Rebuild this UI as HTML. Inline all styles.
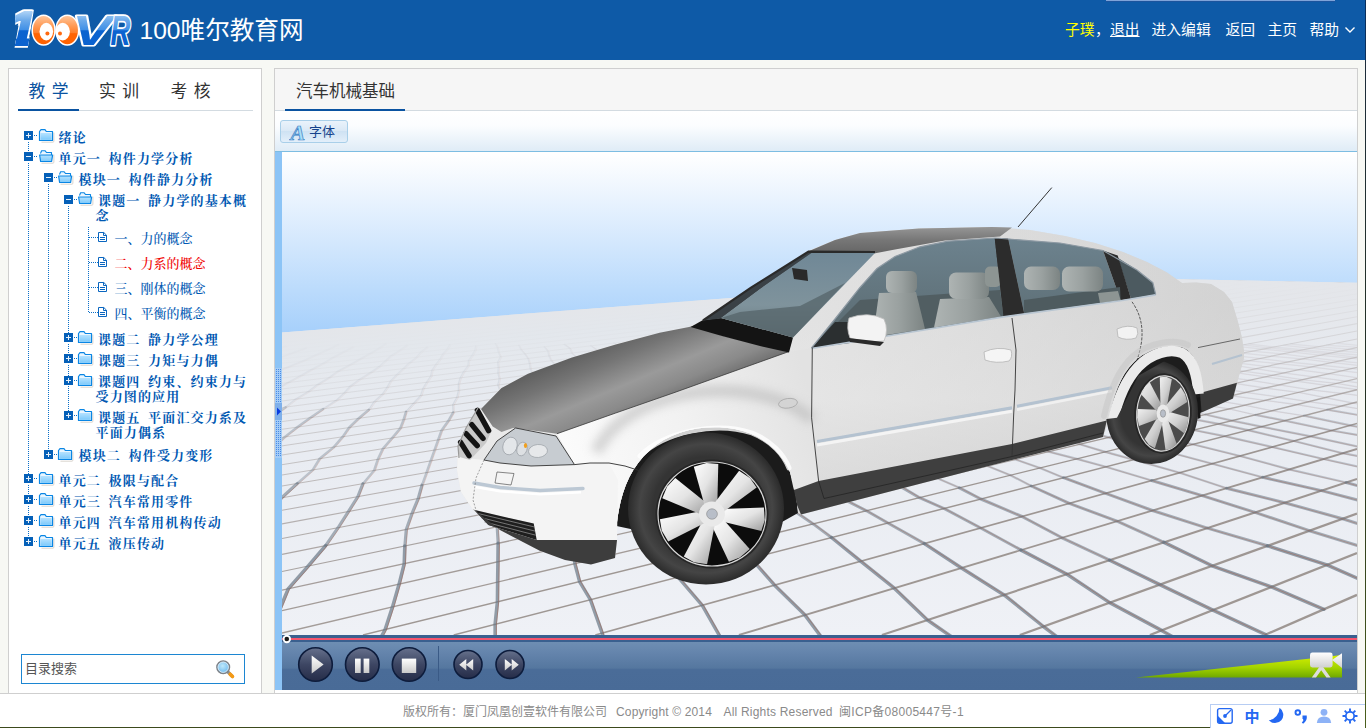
<!DOCTYPE html>
<html lang="zh-CN">
<head>
<meta charset="utf-8">
<title>100唯尔教育网</title>
<style>
*{box-sizing:border-box;margin:0;padding:0}
html,body{width:1366px;height:728px;overflow:hidden}
body{position:relative;background:#f7f8f4;font-family:"Liberation Sans","Noto Sans CJK SC",sans-serif;color:#333}
.abs{position:absolute}
#hdr{left:0;top:0;width:1366px;height:60px;background:#0e5aa7}
#hdr .title{left:139.5px;top:13.5px;font-size:24.6px;line-height:34px;color:#fff;white-space:nowrap;letter-spacing:0}
#nav{top:20px;height:20px;font-size:14.8px;line-height:20px;color:#fff;white-space:nowrap}
#nav span{position:absolute;top:0}
#topstrip{left:1106px;top:0;width:229px;height:1px;background:#7fa3d9;box-shadow:0 1px 0 rgba(40,80,150,.55)}
#rightedge{left:1365px;top:0;width:1px;height:728px;background:linear-gradient(#0a2f5c 0,#0a2f5c 60px,#1c2c3a 61px,#26331f 60%,#4b5f1c 100%)}
/* left panel */
#lp{left:8px;top:68px;width:254px;height:626px;background:#fff;border:1px solid #cfcfcf;border-bottom:none}
.tabs{font-size:16.8px;line-height:22px;color:#333;white-space:nowrap;letter-spacing:6.5px}
#lp .tabline{left:10px;top:41px;width:234px;height:1px;background:#d3dbe1}
#lp .tabsel{left:9px;top:40px;width:61px;height:2px;background:#0a53a1}
/* tree */
.tree{font-family:"Liberation Serif","Noto Serif CJK SC",serif;font-size:13px;line-height:15px;color:#0058b2;white-space:nowrap;font-weight:500}
.tree .b{font-weight:bold;letter-spacing:1.15px}
.tree .row{position:absolute}
.tree .red{color:#f00000}
.exp{position:absolute;width:9px;height:9px;background:#0560b8}
.exp:before{content:"";position:absolute;left:2px;top:4px;width:5px;height:1px;background:#e8f0f8}
.exp.plus:after{content:"";position:absolute;left:4px;top:2px;width:1px;height:5px;background:#e8f0f8}
.vd{position:absolute;width:1px;background:repeating-linear-gradient(to bottom,#0a6fc8 0 1px,transparent 1px 2px)}
.hd{position:absolute;height:1px;background:repeating-linear-gradient(to right,#0a6fc8 0 1px,transparent 1px 2px)}
svg.ico{position:absolute;overflow:visible}
/* search */
#search{left:21px;top:654px;width:224px;height:30px;border:1px solid #1c86d2;background:#fff}
#search .ph{left:3px;top:5px;font-size:13px;line-height:18px;color:#555}
/* right panel */
#rp{left:274px;top:68px;width:1084px;height:626px;background:#fff;border:1px solid #cfcfcf;border-bottom:none}
#rp .rhead{left:0;top:0;width:1082px;height:41px;background:#f6f6f6}
#rp .tabline{left:0;top:41px;width:1082px;height:1px;background:#d3dbe1}
#rp .tabsel{left:10px;top:40px;width:120px;height:2px;background:#0a53a1}
#toolbar{left:0;top:43px;width:1082px;height:40px;background:linear-gradient(#ffffff 0%,#fbfdff 35%,#deebf6 100%)}
#toolbar .bline{left:0;top:39px;width:1082px;height:2px;background:#7dbde2}
#fontbtn{left:5px;top:8px;width:68px;height:23px;border:1px solid #a9cfe9;border-radius:3px;background:linear-gradient(#eaf3fb 0%,#dbe9f6 45%,#cfe2f3 50%,#e3effa 100%)}
#fontbtn .t{left:28px;top:2.5px;font-size:13px;line-height:16px;color:#15428b;white-space:nowrap}
#split{left:0;top:83px;width:7px;height:538px;background:#8cc4f6}
#scene{left:7px;top:83px;width:1075px;height:483px;overflow:hidden}
#player{left:7px;top:566px;width:1075px;height:55px;background:linear-gradient(#6e8eb3 0%,#6e8eb3 13%,#6383ab 35%,#55779f 60%,#4a6c98 63%,#496b97 100%)}
#player .topband{left:0;top:0;width:1075px;height:7px;background:#3a608f}
#player .red{left:0;top:3px;width:1075px;height:2px;background:#f5556e}
/* footer */
#footer{left:0;top:693px;width:1366px;height:34px;background:#fff;border-top:1px solid #cfcfcf}
#footer .t{left:403px;top:10px;font-size:12px;line-height:16px;color:#8a8a8a;white-space:pre}
#desk{left:0;top:727px;width:1366px;height:1px;background:#3c4a1c}
#ime{left:1210px;top:704px;width:156px;height:24px;background:#fff;border-left:1px solid #b7cdf3;border-top:1px solid #b7cdf3}
</style>
</head>
<body>
<svg width="0" height="0" style="position:absolute"><defs>
<linearGradient id="fg" x1="0" y1="0" x2="0" y2="1"><stop offset="0" stop-color="#b5e2ff"/><stop offset="1" stop-color="#7cc9fb"/></linearGradient>
</defs></svg>

<!-- ===== header ===== -->
<div id="hdr" class="abs">
  <svg class="abs" style="left:10px;top:4px" width="130" height="50" viewBox="10 4 130 50">
    <defs>
      <linearGradient id="lgb" gradientUnits="userSpaceOnUse" x1="0" y1="-35" x2="0" y2="1"><stop offset="0" stop-color="#b9d9f8"/><stop offset=".3" stop-color="#6aa9ea"/><stop offset=".56" stop-color="#3f8fe6"/><stop offset=".58" stop-color="#0b63d0"/><stop offset="1" stop-color="#0b62cf"/></linearGradient>
      <linearGradient id="lgo" gradientUnits="userSpaceOnUse" x1="0" y1="15" x2="0" y2="46"><stop offset="0" stop-color="#ffc9a0"/><stop offset=".35" stop-color="#ff9a55"/><stop offset=".58" stop-color="#ff7f2a"/><stop offset=".6" stop-color="#ff6404"/><stop offset="1" stop-color="#ff6200"/></linearGradient>
    </defs>
    <defs><clipPath id="oneclip"><path d="M15.200 6 H34.500 L27.800 48 H14.500 L18.500 25.500 L15.200 26.500Z"/></clipPath></defs>
    <g font-family="'Liberation Sans',sans-serif" font-weight="bold" font-style="italic" stroke-linejoin="round">
      <g clip-path="url(#oneclip)">
        <text transform="translate(6.500 44.800) scale(1.12 1)" font-size="49" fill="#fff" stroke="#fff" stroke-width="5.500">1</text>
        <text transform="translate(6.500 44.800) scale(1.12 1)" font-size="49" fill="url(#lgb)" stroke="url(#lgb)" stroke-width="2">1</text>
      </g>
      <text transform="translate(72 44.800) scale(1.4 1)" font-size="43" fill="#fff" stroke="#fff" stroke-width="3.200">V</text>
      <text transform="translate(72 44.800) scale(1.4 1)" font-size="43" fill="url(#lgb)">V</text>
      <text transform="translate(110.600 44.800) scale(.64 1)" font-size="43" fill="#fff" stroke="#fff" stroke-width="3.600">R</text>
      <text transform="translate(110.600 44.800) scale(.64 1)" font-size="43" fill="url(#lgb)">R</text>
    </g>
    <g>
      <ellipse cx="43.600" cy="30.200" rx="11.400" ry="14.900" fill="url(#lgo)" stroke="#fff" stroke-width="1.500"/>
      <ellipse cx="67.300" cy="30.200" rx="11.400" ry="14.900" fill="url(#lgo)" stroke="#fff" stroke-width="1.500"/>
      <ellipse cx="46.300" cy="31.600" rx="6.800" ry="8.800" fill="#fff"/>
      <ellipse cx="62.700" cy="31.600" rx="7.200" ry="8.800" fill="#fff"/>
      <circle cx="47.400" cy="33.400" r="2" fill="#ff6a10"/>
      <circle cx="60" cy="33.400" r="2" fill="#ff6a10"/>
    </g>
  </svg>
  <div class="abs title">100唯尔教育网</div>
  <div id="nav" class="abs" style="left:0;width:1366px">
    <span style="left:1065px;color:#ffff00">子璞</span>
    <span style="left:1095px">，</span>
    <span style="left:1110px;text-decoration:underline">退出</span>
    <span style="left:1151.500px">进入编辑</span>
    <span style="left:1225.500px">返回</span>
    <span style="left:1267.500px">主页</span>
    <span style="left:1309.500px">帮助</span>
    <svg class="abs" style="left:1344px;top:6px" width="12" height="8" viewBox="0 0 12 8"><path d="M1.5 1.5 L6 6 L10.5 1.5" fill="none" stroke="#fff" stroke-width="1.4"/></svg>
  </div>
  <div id="topstrip" class="abs"></div>
</div>

<!-- ===== left panel ===== -->
<div id="lp" class="abs">
  <div class="abs tabs" style="left:19.500px;top:12px;color:#0a53a1">教学</div>
  <div class="abs tabs" style="left:90px;top:12px">实训</div>
  <div class="abs tabs" style="left:161.500px;top:12px">考核</div>
  <div class="abs tabline"></div>
  <div class="abs tabsel"></div>
</div>
<div class="tree"><i class="exp plus" style="left:24px;top:131px"></i>
<i class="hd" style="left:34px;top:135px;width:4px"></i>
<svg class="ico" style="left:39px;top:129px" width="16" height="14" viewBox="0 0 16 14"><path d="M2.5 13.2h11.6l.8-.6V3.6" fill="none" stroke="#c9c2b8" stroke-width="1" opacity=".7"/><path d="M.5 2.5 L2 .6 H6 L7.3 2.5 H13.5 V11.5 H.5Z" fill="#eaf6ff" stroke="#0a86e4" stroke-width="1.2" stroke-linejoin="round"/><rect x="1.4" y="4" width="11.3" height="6.9" fill="url(#fg)"/></svg>
<div class="row b" style="left:58.5px;top:129.5px">绪论</div>
<i class="exp" style="left:24px;top:152px"></i>
<i class="hd" style="left:34px;top:156px;width:4px"></i>
<svg class="ico" style="left:39px;top:150px" width="16" height="14" viewBox="0 0 16 14"><path d="M2.5 13.2h11.6l.8-.6V4.6" fill="none" stroke="#c9c2b8" stroke-width="1" opacity=".7"/><path d="M1.5 3.5 L2.6 .8 H6.2 L7.5 2.5 H12.5 V5" fill="#eaf6ff" stroke="#0a86e4" stroke-width="1.1" stroke-linejoin="round"/><path d="M.6 5 H13.6 L12.6 11.5 H1.6Z" fill="url(#fg)" stroke="#0a86e4" stroke-width="1.2" stroke-linejoin="round"/></svg>
<div class="row b" style="left:58.5px;top:150.5px">单元一&ensp;构件力学分析</div>
<i class="exp" style="left:44px;top:173px"></i>
<i class="hd" style="left:54px;top:177px;width:4px"></i>
<svg class="ico" style="left:58px;top:171px" width="16" height="14" viewBox="0 0 16 14"><path d="M2.5 13.2h11.6l.8-.6V4.6" fill="none" stroke="#c9c2b8" stroke-width="1" opacity=".7"/><path d="M1.5 3.5 L2.6 .8 H6.2 L7.5 2.5 H12.5 V5" fill="#eaf6ff" stroke="#0a86e4" stroke-width="1.1" stroke-linejoin="round"/><path d="M.6 5 H13.6 L12.6 11.5 H1.6Z" fill="url(#fg)" stroke="#0a86e4" stroke-width="1.2" stroke-linejoin="round"/></svg>
<div class="row b" style="left:78.5px;top:171.5px">模块一&ensp;构件静力分析</div>
<i class="exp" style="left:64px;top:195px"></i>
<i class="hd" style="left:74px;top:199px;width:4px"></i>
<svg class="ico" style="left:78px;top:192px" width="16" height="14" viewBox="0 0 16 14"><path d="M2.5 13.2h11.6l.8-.6V4.6" fill="none" stroke="#c9c2b8" stroke-width="1" opacity=".7"/><path d="M1.5 3.5 L2.6 .8 H6.2 L7.5 2.5 H12.5 V5" fill="#eaf6ff" stroke="#0a86e4" stroke-width="1.1" stroke-linejoin="round"/><path d="M.6 5 H13.6 L12.6 11.5 H1.6Z" fill="url(#fg)" stroke="#0a86e4" stroke-width="1.2" stroke-linejoin="round"/></svg>
<div class="row b" style="left:98px;top:193px">课题一&ensp;静力学的基本概</div>
<div class="row b" style="left:95.5px;top:208px">念</div>
<i class="hd" style="left:89px;top:237px;width:9px"></i>
<svg class="ico" style="left:98px;top:232px" width="10" height="11" viewBox="0 0 10 11"><path d="M.5 .5 H5.8 L8.5 3.2 V9.5 H.5Z" fill="#fff" stroke="#0a66c0" stroke-width="1"/><path d="M5.5 .5V3.5H8.5" fill="none" stroke="#0a66c0" stroke-width="1"/><path d="M2 5.5H7M2 7.5H7" stroke="#0a66c0" stroke-width="1"/></svg>
<div class="row n" style="left:114.5px;top:230.5px">一、力的概念</div>
<i class="hd" style="left:89px;top:262px;width:9px"></i>
<svg class="ico" style="left:98px;top:257px" width="10" height="11" viewBox="0 0 10 11"><path d="M.5 .5 H5.8 L8.5 3.2 V9.5 H.5Z" fill="#fff" stroke="#0a66c0" stroke-width="1"/><path d="M5.5 .5V3.5H8.5" fill="none" stroke="#0a66c0" stroke-width="1"/><path d="M2 5.5H7M2 7.5H7" stroke="#0a66c0" stroke-width="1"/></svg>
<div class="row red" style="left:114.5px;top:255.5px">二、力系的概念</div>
<i class="hd" style="left:89px;top:287px;width:9px"></i>
<svg class="ico" style="left:98px;top:282px" width="10" height="11" viewBox="0 0 10 11"><path d="M.5 .5 H5.8 L8.5 3.2 V9.5 H.5Z" fill="#fff" stroke="#0a66c0" stroke-width="1"/><path d="M5.5 .5V3.5H8.5" fill="none" stroke="#0a66c0" stroke-width="1"/><path d="M2 5.5H7M2 7.5H7" stroke="#0a66c0" stroke-width="1"/></svg>
<div class="row n" style="left:114.5px;top:280.5px">三、刚体的概念</div>
<i class="hd" style="left:89px;top:312px;width:9px"></i>
<svg class="ico" style="left:98px;top:307px" width="10" height="11" viewBox="0 0 10 11"><path d="M.5 .5 H5.8 L8.5 3.2 V9.5 H.5Z" fill="#fff" stroke="#0a66c0" stroke-width="1"/><path d="M5.5 .5V3.5H8.5" fill="none" stroke="#0a66c0" stroke-width="1"/><path d="M2 5.5H7M2 7.5H7" stroke="#0a66c0" stroke-width="1"/></svg>
<div class="row n" style="left:114.5px;top:305.5px">四、平衡的概念</div>
<i class="exp plus" style="left:64px;top:333px"></i>
<i class="hd" style="left:74px;top:337px;width:4px"></i>
<svg class="ico" style="left:78px;top:331px" width="16" height="14" viewBox="0 0 16 14"><path d="M2.5 13.2h11.6l.8-.6V3.6" fill="none" stroke="#c9c2b8" stroke-width="1" opacity=".7"/><path d="M.5 2.5 L2 .6 H6 L7.3 2.5 H13.5 V11.5 H.5Z" fill="#eaf6ff" stroke="#0a86e4" stroke-width="1.2" stroke-linejoin="round"/><rect x="1.4" y="4" width="11.3" height="6.9" fill="url(#fg)"/></svg>
<div class="row b" style="left:98px;top:331.5px">课题二&ensp;静力学公理</div>
<i class="exp plus" style="left:64px;top:354px"></i>
<i class="hd" style="left:74px;top:358px;width:4px"></i>
<svg class="ico" style="left:78px;top:352px" width="16" height="14" viewBox="0 0 16 14"><path d="M2.5 13.2h11.6l.8-.6V3.6" fill="none" stroke="#c9c2b8" stroke-width="1" opacity=".7"/><path d="M.5 2.5 L2 .6 H6 L7.3 2.5 H13.5 V11.5 H.5Z" fill="#eaf6ff" stroke="#0a86e4" stroke-width="1.2" stroke-linejoin="round"/><rect x="1.4" y="4" width="11.3" height="6.9" fill="url(#fg)"/></svg>
<div class="row b" style="left:98px;top:352.5px">课题三&ensp;力矩与力偶</div>
<i class="exp plus" style="left:64px;top:376px"></i>
<i class="hd" style="left:74px;top:380px;width:4px"></i>
<svg class="ico" style="left:78px;top:374px" width="16" height="14" viewBox="0 0 16 14"><path d="M2.5 13.2h11.6l.8-.6V3.6" fill="none" stroke="#c9c2b8" stroke-width="1" opacity=".7"/><path d="M.5 2.5 L2 .6 H6 L7.3 2.5 H13.5 V11.5 H.5Z" fill="#eaf6ff" stroke="#0a86e4" stroke-width="1.2" stroke-linejoin="round"/><rect x="1.4" y="4" width="11.3" height="6.9" fill="url(#fg)"/></svg>
<div class="row b" style="left:98px;top:374px">课题四&ensp;约束、约束力与</div>
<div class="row b" style="left:95.5px;top:389px">受力图的应用</div>
<i class="exp plus" style="left:64px;top:411px"></i>
<i class="hd" style="left:74px;top:415px;width:4px"></i>
<svg class="ico" style="left:78px;top:409px" width="16" height="14" viewBox="0 0 16 14"><path d="M2.5 13.2h11.6l.8-.6V3.6" fill="none" stroke="#c9c2b8" stroke-width="1" opacity=".7"/><path d="M.5 2.5 L2 .6 H6 L7.3 2.5 H13.5 V11.5 H.5Z" fill="#eaf6ff" stroke="#0a86e4" stroke-width="1.2" stroke-linejoin="round"/><rect x="1.4" y="4" width="11.3" height="6.9" fill="url(#fg)"/></svg>
<div class="row b" style="left:98px;top:409.5px">课题五&ensp;平面汇交力系及</div>
<div class="row b" style="left:95.5px;top:424.5px">平面力偶系</div>
<i class="exp plus" style="left:44px;top:450px"></i>
<i class="hd" style="left:54px;top:454px;width:4px"></i>
<svg class="ico" style="left:58px;top:448px" width="16" height="14" viewBox="0 0 16 14"><path d="M2.5 13.2h11.6l.8-.6V3.6" fill="none" stroke="#c9c2b8" stroke-width="1" opacity=".7"/><path d="M.5 2.5 L2 .6 H6 L7.3 2.5 H13.5 V11.5 H.5Z" fill="#eaf6ff" stroke="#0a86e4" stroke-width="1.2" stroke-linejoin="round"/><rect x="1.4" y="4" width="11.3" height="6.9" fill="url(#fg)"/></svg>
<div class="row b" style="left:78.5px;top:448px">模块二&ensp;构件受力变形</div>
<i class="exp plus" style="left:24px;top:474px"></i>
<i class="hd" style="left:34px;top:478px;width:4px"></i>
<svg class="ico" style="left:39px;top:472px" width="16" height="14" viewBox="0 0 16 14"><path d="M2.5 13.2h11.6l.8-.6V3.6" fill="none" stroke="#c9c2b8" stroke-width="1" opacity=".7"/><path d="M.5 2.5 L2 .6 H6 L7.3 2.5 H13.5 V11.5 H.5Z" fill="#eaf6ff" stroke="#0a86e4" stroke-width="1.2" stroke-linejoin="round"/><rect x="1.4" y="4" width="11.3" height="6.9" fill="url(#fg)"/></svg>
<div class="row b" style="left:58.5px;top:472.5px">单元二&ensp;极限与配合</div>
<i class="exp plus" style="left:24px;top:495px"></i>
<i class="hd" style="left:34px;top:499px;width:4px"></i>
<svg class="ico" style="left:39px;top:493px" width="16" height="14" viewBox="0 0 16 14"><path d="M2.5 13.2h11.6l.8-.6V3.6" fill="none" stroke="#c9c2b8" stroke-width="1" opacity=".7"/><path d="M.5 2.5 L2 .6 H6 L7.3 2.5 H13.5 V11.5 H.5Z" fill="#eaf6ff" stroke="#0a86e4" stroke-width="1.2" stroke-linejoin="round"/><rect x="1.4" y="4" width="11.3" height="6.9" fill="url(#fg)"/></svg>
<div class="row b" style="left:58.5px;top:493.5px">单元三&ensp;汽车常用零件</div>
<i class="exp plus" style="left:24px;top:516px"></i>
<i class="hd" style="left:34px;top:520px;width:4px"></i>
<svg class="ico" style="left:39px;top:514px" width="16" height="14" viewBox="0 0 16 14"><path d="M2.5 13.2h11.6l.8-.6V3.6" fill="none" stroke="#c9c2b8" stroke-width="1" opacity=".7"/><path d="M.5 2.5 L2 .6 H6 L7.3 2.5 H13.5 V11.5 H.5Z" fill="#eaf6ff" stroke="#0a86e4" stroke-width="1.2" stroke-linejoin="round"/><rect x="1.4" y="4" width="11.3" height="6.9" fill="url(#fg)"/></svg>
<div class="row b" style="left:58.5px;top:514.5px">单元四&ensp;汽车常用机构传动</div>
<i class="exp plus" style="left:24px;top:537px"></i>
<i class="hd" style="left:34px;top:541px;width:4px"></i>
<svg class="ico" style="left:39px;top:535px" width="16" height="14" viewBox="0 0 16 14"><path d="M2.5 13.2h11.6l.8-.6V3.6" fill="none" stroke="#c9c2b8" stroke-width="1" opacity=".7"/><path d="M.5 2.5 L2 .6 H6 L7.3 2.5 H13.5 V11.5 H.5Z" fill="#eaf6ff" stroke="#0a86e4" stroke-width="1.2" stroke-linejoin="round"/><rect x="1.4" y="4" width="11.3" height="6.9" fill="url(#fg)"/></svg>
<div class="row b" style="left:58.5px;top:535.5px">单元五&ensp;液压传动</div>
<i class="vd" style="left:28px;top:142px;height:10px"></i>
<i class="vd" style="left:28px;top:163px;height:312px"></i>
<i class="vd" style="left:28px;top:485px;height:11px"></i>
<i class="vd" style="left:28px;top:506px;height:11px"></i>
<i class="vd" style="left:28px;top:527px;height:11px"></i>
<i class="vd" style="left:48px;top:184px;height:266px"></i>
<i class="vd" style="left:68px;top:206px;height:128px"></i>
<i class="vd" style="left:68px;top:344px;height:11px"></i>
<i class="vd" style="left:68px;top:365px;height:11px"></i>
<i class="vd" style="left:68px;top:386px;height:26px"></i>
<i class="vd" style="left:88px;top:227px;height:86px"></i></div>
<div id="search" class="abs">
  <div class="abs ph">目录搜索</div>
  <svg class="abs" style="left:191px;top:2px" width="24" height="24" viewBox="213 657 24 24">
    <defs><radialGradient id="mg" cx=".45" cy=".4" r=".6"><stop offset="0" stop-color="#bfe9fb"/><stop offset="1" stop-color="#69b7ee"/></radialGradient></defs>
    <path d="M228 672 L232.300 676.300" stroke="#8a8f96" stroke-width="3.200" stroke-linecap="round"/>
    <path d="M230.200 674.200 L232.500 676.500" stroke="#f59a14" stroke-width="3.600" stroke-linecap="round"/>
    <circle cx="223.200" cy="667.200" r="6.300" fill="url(#mg)" stroke="#7d8288" stroke-width="1.500"/>
    <circle cx="223.200" cy="667.200" r="5.200" fill="none" stroke="#e9f3fa" stroke-width=".8"/>
  </svg>
</div>

<!-- ===== right panel ===== -->
<div id="rp" class="abs">
  <div class="abs rhead"></div>
  <div class="abs tabs" style="left:21px;top:10.500px;letter-spacing:0;font-size:16.500px">汽车机械基础</div>
  <div class="abs tabline"></div>
  <div class="abs tabsel"></div>
  <div id="toolbar" class="abs">
    <div id="fontbtn" class="abs">
      <svg class="abs" style="left:8px;top:2px" width="18" height="18" viewBox="0 0 18 18">
        <text x="1.500" y="16.600" font-family="'Liberation Serif',serif" font-style="italic" font-weight="bold" font-size="22" fill="#a9def9" stroke="#3b7fc4" stroke-width=".7">A</text>
      </svg>
      <div class="abs t">字体</div>
    </div>
    <div class="abs bline"></div>
  </div>
  <div id="split" class="abs">
    <div class="abs" style="left:0;top:216px;width:7px;height:90px;background:#a3ccf6"></div>
    <div class="abs" style="left:1px;top:217px;width:6px;height:88px;background:radial-gradient(circle at 0.5px 0.5px,#4a8be6 0.55px,transparent 0.8px) 0 0/2px 2px"></div>
    <div class="abs" style="left:0;top:251px;width:7px;height:17px;background:#7fb0ea"></div>
    <svg class="abs" style="left:1px;top:255px" width="6" height="9" viewBox="0 0 6 9"><path d="M1 .5 L5 4.500 L1 8.500Z" fill="#0a3ce0"/></svg>
  </div>
  <div id="scene" class="abs"><svg width="1075" height="483" viewBox="282 152 1075 483" style="display:block">
<defs>
<linearGradient id="sky" gradientUnits="userSpaceOnUse" x1="0" y1="154" x2="0" y2="336"><stop offset="0" stop-color="#ffffff"/><stop offset=".25" stop-color="#e9f3fe"/><stop offset=".5" stop-color="#d2e7fd"/><stop offset=".75" stop-color="#bbdbfc"/><stop offset="1" stop-color="#a5cffb"/></linearGradient>
<linearGradient id="gnd" gradientUnits="userSpaceOnUse" x1="0" y1="276" x2="0" y2="635"><stop offset="0" stop-color="#dfe4ea"/><stop offset=".18" stop-color="#e4e8ee"/><stop offset=".5" stop-color="#e9ecf2"/><stop offset="1" stop-color="#eff1f6"/></linearGradient>
<linearGradient id="hood" gradientUnits="userSpaceOnUse" x1="590" y1="330" x2="630" y2="425"><stop offset="0" stop-color="#4e4e4e"/><stop offset=".35" stop-color="#747474"/><stop offset=".62" stop-color="#9a9a9a"/><stop offset=".8" stop-color="#8a8a8a"/><stop offset="1" stop-color="#666"/></linearGradient>
<linearGradient id="body" gradientUnits="userSpaceOnUse" x1="0" y1="300" x2="0" y2="520"><stop offset="0" stop-color="#dedede"/><stop offset=".45" stop-color="#e6e6e6"/><stop offset="1" stop-color="#c8c8c8"/></linearGradient>
<linearGradient id="bodyx" gradientUnits="userSpaceOnUse" x1="560" y1="0" x2="1240" y2="0"><stop offset="0" stop-color="#f4f4f4"/><stop offset=".35" stop-color="#e5e5e5"/><stop offset=".7" stop-color="#d8d8d8"/><stop offset="1" stop-color="#c9c9c9"/></linearGradient>
<linearGradient id="glass" gradientUnits="userSpaceOnUse" x1="0" y1="235" x2="0" y2="340"><stop offset="0" stop-color="#6d838f"/><stop offset="1" stop-color="#5a6a70"/></linearGradient>
<linearGradient id="wsg" gradientUnits="userSpaceOnUse" x1="0" y1="250" x2="0" y2="350"><stop offset="0" stop-color="#6f8796"/><stop offset=".55" stop-color="#7f939c"/><stop offset="1" stop-color="#5d6c70"/></linearGradient>
<linearGradient id="roof" gradientUnits="userSpaceOnUse" x1="0" y1="226" x2="0" y2="262"><stop offset="0" stop-color="#989898"/><stop offset=".4" stop-color="#767676"/><stop offset="1" stop-color="#5a5a5a"/></linearGradient>
<radialGradient id="tire" cx=".5" cy=".5" r=".5"><stop offset=".68" stop-color="#343434"/><stop offset=".85" stop-color="#454545"/><stop offset="1" stop-color="#2b2b2b"/></radialGradient>
<linearGradient id="rimw" x1="0" y1="0" x2="1" y2="1"><stop offset="0" stop-color="#ffffff"/><stop offset=".5" stop-color="#e4e4e4"/><stop offset="1" stop-color="#9c9c9c"/></linearGradient>
<filter id="blur5" x="-20%" y="-50%" width="140%" height="200%"><feGaussianBlur stdDeviation="5"/></filter>
<linearGradient id="rimw2" x1="0" y1="0" x2="1" y2="1"><stop offset="0" stop-color="#f2f2f2"/><stop offset=".5" stop-color="#cfcfcf"/><stop offset="1" stop-color="#8f8f8f"/></linearGradient>
<linearGradient id="seat" x1="0" y1="0" x2="1" y2="0"><stop offset="0" stop-color="#aeb4b3"/><stop offset=".5" stop-color="#9aa1a0"/><stop offset="1" stop-color="#7c8483"/></linearGradient>
<linearGradient id="fend" gradientUnits="userSpaceOnUse" x1="560" y1="430" x2="800" y2="360"><stop offset="0" stop-color="#fbfbfb"/><stop offset=".5" stop-color="#f1f1f1"/><stop offset="1" stop-color="#e2e2e2"/></linearGradient>
<clipPath id="gclip"><path d="M282 332.4 L1018 276 L1357 282.7 V635 H282Z"/></clipPath>
</defs>
<rect x="282" y="152" width="1075" height="200" fill="url(#sky)"/>
<path d="M282 332.4 L1018 276 L1357 282.7 V635 H282Z" fill="url(#gnd)"/>
<g clip-path="url(#gclip)" fill="none">
<path d="M1264.7 635.0L1357.0 594.9" stroke="#80746d" stroke-opacity="0.72" stroke-width="2.30"/>
<path d="M1149.9 635.0L1357.0 553.0" stroke="#80746d" stroke-opacity="0.72" stroke-width="2.30"/>
<path d="M1019.8 635.0L1357.0 513.6" stroke="#80746d" stroke-opacity="0.72" stroke-width="2.30"/>
<path d="M881.9 635.0L1357.0 479.0" stroke="#80746d" stroke-opacity="0.72" stroke-width="2.10"/>
<path d="M738.9 635.0L1357.0 449.0" stroke="#80746d" stroke-opacity="0.72" stroke-width="1.86"/>
<path d="M595.3 635.0L1357.0 423.5" stroke="#80746d" stroke-opacity="0.72" stroke-width="1.66"/>
<path d="M453.7 635.0L1357.0 402.0" stroke="#80746d" stroke-opacity="0.72" stroke-width="1.49"/>
<path d="M363.0 635.0L1357.0 389.7" stroke="#80746d" stroke-opacity="0.72" stroke-width="1.39"/>
<path d="M282.0 633.0L1357.0 378.6" stroke="#80746d" stroke-opacity="0.68" stroke-width="1.30"/>
<path d="M282.0 610.6L1357.0 367.3" stroke="#80746d" stroke-opacity="0.68" stroke-width="1.30"/>
<path d="M282.0 590.2L1357.0 357.0" stroke="#80746d" stroke-opacity="0.66" stroke-width="1.27"/>
<path d="M282.0 571.5L1357.0 347.6" stroke="#80746d" stroke-opacity="0.62" stroke-width="1.22"/>
<path d="M282.0 554.3L1357.0 339.0" stroke="#80746d" stroke-opacity="0.58" stroke-width="1.18"/>
<path d="M282.0 538.5L1357.0 331.0" stroke="#80746d" stroke-opacity="0.54" stroke-width="1.13"/>
<path d="M282.0 523.9L1357.0 323.6" stroke="#80746d" stroke-opacity="0.51" stroke-width="1.10"/>
<path d="M282.0 510.3L1357.0 316.8" stroke="#80746d" stroke-opacity="0.48" stroke-width="1.06"/>
<path d="M282.0 497.7L1357.0 310.4" stroke="#80746d" stroke-opacity="0.45" stroke-width="1.02"/>
<path d="M282.0 486.0L1357.0 304.5" stroke="#80746d" stroke-opacity="0.43" stroke-width="0.99"/>
<path d="M282.0 475.0L1357.0 299.0" stroke="#80746d" stroke-opacity="0.40" stroke-width="0.96"/>
<path d="M282.0 464.7L1357.0 293.8" stroke="#80746d" stroke-opacity="0.38" stroke-width="0.94"/>
<path d="M282.0 455.0L1357.0 288.9" stroke="#80746d" stroke-opacity="0.36" stroke-width="0.91"/>
<path d="M282.0 445.9L1357.0 284.3" stroke="#80746d" stroke-opacity="0.34" stroke-width="0.89"/>
<path d="M282.0 437.4L1357.0 280.0" stroke="#80746d" stroke-opacity="0.32" stroke-width="0.86"/>
<path d="M282.0 429.3L1357.0 275.9" stroke="#80746d" stroke-opacity="0.30" stroke-width="0.84"/>
<path d="M282.0 421.6L1357.0 272.1" stroke="#80746d" stroke-opacity="0.28" stroke-width="0.82"/>
<path d="M282.0 414.4L1357.0 268.4" stroke="#80746d" stroke-opacity="0.27" stroke-width="0.80"/>
<path d="M282.0 407.6L1357.0 265.0" stroke="#80746d" stroke-opacity="0.25" stroke-width="0.78"/>
<path d="M282.0 401.0L1357.0 261.7" stroke="#80746d" stroke-opacity="0.24" stroke-width="0.76"/>
<path d="M282.0 394.9L1357.0 258.6" stroke="#80746d" stroke-opacity="0.22" stroke-width="0.75"/>
<path d="M282.0 389.0L1357.0 255.6" stroke="#80746d" stroke-opacity="0.21" stroke-width="0.73"/>
<path d="M282.0 383.3L1357.0 252.8" stroke="#80746d" stroke-opacity="0.20" stroke-width="0.72"/>
<path d="M282.0 378.0L1357.0 250.1" stroke="#80746d" stroke-opacity="0.18" stroke-width="0.70"/>
<path d="M282.0 372.9L1357.0 247.5" stroke="#80746d" stroke-opacity="0.17" stroke-width="0.69"/>
<path d="M282.0 368.0L1357.0 245.0" stroke="#80746d" stroke-opacity="0.16" stroke-width="0.68"/>
<path d="M282.0 363.3L1357.0 242.7" stroke="#80746d" stroke-opacity="0.15" stroke-width="0.66"/>
<path d="M282.0 358.8L1357.0 240.4" stroke="#80746d" stroke-opacity="0.14" stroke-width="0.65"/>
<path d="M282.0 354.5L1357.0 238.2" stroke="#80746d" stroke-opacity="0.13" stroke-width="0.64"/>
<path d="M282.0 350.4L1357.0 236.2" stroke="#80746d" stroke-opacity="0.12" stroke-width="0.63"/>
<path d="M282.0 346.4L1357.0 234.2" stroke="#80746d" stroke-opacity="0.11" stroke-width="0.62"/>
<path d="M282.0 342.6L1357.0 232.2" stroke="#80746d" stroke-opacity="0.11" stroke-width="0.61"/>
<path d="M282.0 339.0L1357.0 230.4" stroke="#80746d" stroke-opacity="0.10" stroke-width="0.60"/>
<path d="M282.0 335.4L1357.0 228.6" stroke="#80746d" stroke-opacity="0.10" stroke-width="0.60"/>
<path d="M268.5 344.0L251.0 349.7M251.0 349.7L234.5 355.4M234.5 355.4L214.4 361.8M285.9 346.0L270.5 351.6M270.5 351.6L251.9 357.8M251.9 357.8L234.2 364.1M234.2 364.1L216.1 370.7M306.0 347.8L289.7 353.7M289.7 353.7L273.8 359.7M273.8 359.7L256.7 366.1M256.7 366.1L241.9 372.6M241.9 372.6L225.5 379.5M225.5 379.5L203.8 387.3M338.4 344.4L327.3 349.6M327.3 349.6L315.2 355.2M315.2 355.2L302.4 361.0M302.4 361.0L286.7 367.4M286.7 367.4L269.4 374.3M269.4 374.3L254.3 381.3M254.3 381.3L236.0 388.9M236.0 388.9L218.6 396.8M218.6 396.8L200.0 405.2M353.0 346.8L342.9 352.1M342.9 352.1L332.2 357.7M332.2 357.7L323.1 363.3M323.1 363.3L311.6 369.4M311.6 369.4L300.2 375.8M300.2 375.8L287.2 382.7M287.2 382.7L274.5 389.9M274.5 389.9L259.5 397.7M259.5 397.7L242.3 406.2M242.3 406.2L229.3 414.5M385.8 343.3L379.0 348.1M379.0 348.1L369.8 353.5M369.8 353.5L359.6 359.1M359.6 359.1L349.3 365.0M349.3 365.0L337.3 371.4M337.3 371.4L328.7 377.7M328.7 377.7L317.3 384.6M317.3 384.6L308.2 391.5M308.2 391.5L295.3 399.3M295.3 399.3L285.6 407.1M406.9 345.1L400.1 350.0M400.1 350.0L391.2 355.5M391.2 355.5L385.0 360.9M385.0 360.9L379.4 366.4M379.4 366.4L370.3 372.6M370.3 372.6L359.6 379.3M359.6 379.3L350.0 386.2M350.0 386.2L344.0 393.0M344.0 393.0L336.1 400.4M336.1 400.4L323.1 408.8M427.2 347.0L420.6 352.1M420.6 352.1L416.4 357.2M416.4 357.2L409.0 362.9M409.0 362.9L403.1 368.6M403.1 368.6L396.6 374.7M396.6 374.7L390.4 381.1M390.4 381.1L387.0 387.4M387.0 387.4L382.2 394.3M382.2 394.3L373.7 402.0M373.7 402.0L368.8 409.6M449.7 344.5L447.1 349.1M447.1 349.1L442.6 354.1M442.6 354.1L439.8 359.2M439.8 359.2L435.6 364.7M435.6 364.7L431.8 370.4M431.8 370.4L430.7 376.0M430.7 376.0L426.5 382.3M426.5 382.3L422.7 388.9M422.7 388.9L420.6 395.6M420.6 395.6L413.6 403.3M413.6 403.3L405.9 411.6M475.8 345.8L474.8 350.4M474.8 350.4L472.0 355.4M472.0 355.4L468.4 360.7M468.4 360.7L467.9 365.9M467.9 365.9L463.4 371.9M463.4 371.9L460.1 378.0M460.1 378.0L458.3 384.2M458.3 384.2L458.4 390.5M458.4 390.5L456.8 397.3M456.8 397.3L452.7 404.9M452.7 404.9L453.1 412.3M495.4 343.6L497.4 347.8M497.4 347.8L498.3 352.3M498.3 352.3L500.4 356.8M500.4 356.8L497.6 362.2M497.6 362.2L498.2 367.4M498.2 367.4L497.9 373.1M497.9 373.1L499.2 378.7M499.2 378.7L497.8 385.1M497.8 385.1L500.0 391.3M500.0 391.3L496.9 398.6M496.9 398.6L497.0 405.9M497.0 405.9L498.5 413.4M518.8 345.3L520.8 349.6M520.8 349.6L524.7 353.9M524.7 353.9L527.9 358.5M527.9 358.5L529.4 363.5M529.4 363.5L530.2 368.9M530.2 368.9L532.6 374.3M532.6 374.3L534.4 380.1M534.4 380.1L535.7 386.3M535.7 386.3L538.1 392.7M538.1 392.7L537.2 400.0M537.2 400.0L541.0 407.0M541.0 407.0L539.7 415.2M544.3 346.8L547.7 351.1M547.7 351.1L548.8 355.9M548.8 355.9L551.2 360.7M551.2 360.7L556.0 365.5M556.0 365.5L561.5 370.5M561.5 370.5L566.0 375.8M566.0 375.8L568.7 381.8M568.7 381.8L572.9 387.8M572.9 387.8L575.4 394.4M575.4 394.4L576.9 401.6M576.9 401.6L581.1 408.8M564.2 344.4L569.9 348.4M569.9 348.4L571.4 353.1M571.4 353.1L576.7 357.5M576.7 357.5L581.4 362.2M581.4 362.2L584.8 367.4M584.8 367.4L591.2 372.4M591.2 372.4L593.5 378.3M593.5 378.3L598.6 384.1M598.6 384.1L603.9 390.2M603.9 390.2L609.6 396.7M609.6 396.7L618.0 403.1M618.0 403.1L622.5 410.5M590.7 345.8L596.8 349.9M596.8 349.9L602.2 354.3M602.2 354.3L608.4 358.7M608.4 358.7L615.6 363.3M615.6 363.3L621.0 368.4M621.0 368.4L628.8 373.4M628.8 373.4L635.5 378.8M635.5 378.8L639.9 385.0M639.9 385.0L650.0 390.6M650.0 390.6L657.8 396.9M657.8 396.9L663.4 404.0M663.4 404.0L671.6 411.2M613.7 343.1L620.0 347.0M620.0 347.0L626.7 351.2M626.7 351.2L632.3 355.6M632.3 355.6L640.4 360.0M640.4 360.0L647.7 364.8M647.7 364.8L654.3 369.8M654.3 369.8L659.7 375.4M659.7 375.4L667.6 380.9M667.6 380.9L676.6 386.6M676.6 386.6L687.5 392.3M687.5 392.3L697.1 398.7M697.1 398.7L703.9 405.9M703.9 405.9L716.8 412.6M635.9 345.1L644.4 348.9M644.4 348.9L652.7 353.0M652.7 353.0L660.8 357.3M660.8 357.3L671.0 361.6M671.0 361.6L680.0 366.3M680.0 366.3L687.9 371.4M687.9 371.4L696.7 376.7M696.7 376.7L708.7 381.8M708.7 381.8L719.2 387.4M719.2 387.4L728.2 393.7M728.2 393.7L741.9 399.7M741.9 399.7L754.2 406.3M754.2 406.3L767.1 413.2M665.8 346.2L674.9 350.1M674.9 350.1L682.6 354.4M682.6 354.4L691.7 358.8M691.7 358.8L699.2 363.6M699.2 363.6L708.9 368.4M708.9 368.4L721.4 373.0M721.4 373.0L734.9 377.8M734.9 377.8L746.3 383.3M746.3 383.3L757.3 389.1M757.3 389.1L768.0 395.4M768.0 395.4L782.2 401.5M782.2 401.5L799.3 407.6M799.3 407.6L811.4 415.0M681.2 344.2L689.9 348.2M689.9 348.2L699.2 352.2M699.2 352.2L709.6 356.3M709.6 356.3L718.3 360.9M718.3 360.9L729.3 365.5M729.3 365.5L741.6 370.1M741.6 370.1L754.5 374.9M754.5 374.9L767.3 380.0M767.3 380.0L782.7 385.1M782.7 385.1L797.3 390.6M797.3 390.6L814.0 396.2M814.0 396.2L827.4 402.7M827.4 402.7L845.2 408.9M710.2 345.5L718.8 349.6M718.8 349.6L729.2 353.7M729.2 353.7L741.7 357.7M741.7 357.7L750.9 362.4M750.9 362.4L762.8 367.0M762.8 367.0L776.8 371.5M776.8 371.5L792.9 376.1M792.9 376.1L810.0 380.7M810.0 380.7L822.3 386.5M822.3 386.5L837.9 392.1M837.9 392.1L855.9 397.7M855.9 397.7L873.1 403.9M873.1 403.9L892.4 410.2M723.3 343.8L736.9 347.2M736.9 347.2L748.4 351.1M748.4 351.1L762.1 354.8M762.1 354.8L773.8 359.1M773.8 359.1L786.8 363.5M786.8 363.5L800.7 367.9M800.7 367.9L814.7 372.7M814.7 372.7L830.3 377.5M830.3 377.5L842.9 383.1M842.9 383.1L860.7 388.3M860.7 388.3L880.2 393.5M880.2 393.5L896.1 399.8M896.1 399.8L914.7 406.0M914.7 406.0L936.4 412.2M755.8 344.7L768.6 348.3M768.6 348.3L780.2 352.3M780.2 352.3L795.1 356.1M795.1 356.1L809.1 360.2M809.1 360.2L823.7 364.5M823.7 364.5L839.0 368.9M839.0 368.9L854.2 373.7M854.2 373.7L871.4 378.5M871.4 378.5L888.8 383.5M888.8 383.5L906.9 388.8M906.9 388.8L925.9 394.4M925.9 394.4L945.8 400.2M945.8 400.2L965.9 406.5M965.9 406.5L988.7 412.8M782.8 346.4L796.7 350.0M796.7 350.0L811.0 353.8M811.0 353.8L825.0 357.9M825.0 357.9L842.6 361.6M842.6 361.6L858.5 365.9M858.5 365.9L875.1 370.4M875.1 370.4L892.4 375.0M892.4 375.0L910.5 379.9M910.5 379.9L926.2 385.5M926.2 385.5L946.6 390.7M946.6 390.7L968.8 395.9M968.8 395.9L988.7 402.1M988.7 402.1L1010.6 408.4M1010.6 408.4L1031.0 415.5M798.0 344.3L813.8 347.7M813.8 347.7L826.2 351.6M826.2 351.6L842.0 355.4M842.0 355.4L859.3 359.1M859.3 359.1L873.2 363.7M873.2 363.7L892.9 367.6M892.9 367.6L908.7 372.4M908.7 372.4L927.2 377.1M927.2 377.1L944.6 382.3M944.6 382.3L964.9 387.4M964.9 387.4L986.8 392.6M986.8 392.6L1006.9 398.6M1006.9 398.6L1033.3 403.8M1033.3 403.8L1057.2 410.1M824.1 346.2L838.9 349.8M838.9 349.8L854.7 353.5M854.7 353.5L871.0 357.4M871.0 357.4L889.5 361.1M889.5 361.1L906.7 365.4M906.7 365.4L927.5 369.3M927.5 369.3L948.2 373.5M948.2 373.5L965.5 378.6M965.5 378.6L989.5 383.0M989.5 383.0L1013.1 387.7M1013.1 387.7L1033.1 393.5M1033.1 393.5L1059.8 398.5M1059.8 398.5L1084.3 404.4M1084.3 404.4L1110.4 410.5M841.4 343.8L855.2 347.5M855.2 347.5L872.2 351.0M872.2 351.0L888.9 354.7M888.9 354.7L904.9 358.8M904.9 358.8L922.7 362.8M922.7 362.8L941.9 366.9M941.9 366.9L961.4 371.3M961.4 371.3L981.9 375.8M981.9 375.8L1004.5 380.3M1004.5 380.3L1026.6 385.2M1026.6 385.2L1048.9 390.5M1048.9 390.5L1073.9 395.7M1073.9 395.7L1099.0 401.4M1099.0 401.4L1127.7 406.8M1127.7 406.8L1156.0 412.8M872.2 345.1L889.7 348.4M889.7 348.4L906.4 352.1M906.4 352.1L923.2 355.9M923.2 355.9L943.0 359.6M943.0 359.6L962.9 363.5M962.9 363.5L983.8 367.5M983.8 367.5L1005.7 371.6M1005.7 371.6L1028.2 376.0M1028.2 376.0L1049.2 381.0M1049.2 381.0L1071.4 386.1M1071.4 386.1L1099.5 390.6M1099.5 390.6L1126.3 395.7M1126.3 395.7L1153.6 401.1M1153.6 401.1L1178.9 407.6M1178.9 407.6L1205.5 414.5M881.9 343.7L898.5 347.1M898.5 347.1L917.3 350.4M917.3 350.4L936.2 353.9M936.2 353.9L956.1 357.5M956.1 357.5L975.4 361.4M975.4 361.4L996.0 365.4M996.0 365.4L1016.1 369.8M1016.1 369.8L1038.5 374.1M1038.5 374.1L1063.3 378.3M1063.3 378.3L1089.8 382.6M1089.8 382.6L1112.4 388.0M1112.4 388.0L1137.6 393.3M1137.6 393.3L1167.4 398.2M1167.4 398.2L1197.1 403.5M1197.1 403.5L1229.3 408.8M1229.3 408.8L1255.5 414.8M915.2 344.7L935.7 347.7M935.7 347.7L953.7 351.2M953.7 351.2L973.7 354.7M973.7 354.7L994.9 358.2M994.9 358.2L1016.2 362.0M1016.2 362.0L1037.7 366.1M1037.7 366.1L1059.8 370.3M1059.8 370.3L1081.1 375.0M1081.1 375.0L1108.2 379.0M1108.2 379.0L1131.2 384.2M1131.2 384.2L1155.3 389.6M1155.3 389.6L1183.8 394.6M1183.8 394.6L1212.9 399.9M1212.9 399.9L1244.8 405.2M1244.8 405.2L1271.9 410.7M1271.9 410.7L1304.0 415.6M946.5 346.0L963.7 349.7M963.7 349.7L982.7 353.3M982.7 353.3L1004.7 356.6M1004.7 356.6L1027.3 360.1M1027.3 360.1L1048.5 364.2M1048.5 364.2L1069.8 368.5M1069.8 368.5L1093.8 372.7M1093.8 372.7L1120.3 376.7M1120.3 376.7L1145.5 381.3M1145.5 381.3L1171.9 386.2M1171.9 386.2L1201.6 390.7M1201.6 390.7L1231.6 395.7M1231.6 395.7L1265.4 400.3M1265.4 400.3L1296.9 404.5M1296.9 404.5L1327.3 409.6M956.9 344.5L975.7 347.8M975.7 347.8L995.6 351.2M995.6 351.2L1019.1 354.3M1019.1 354.3L1043.2 357.5M1043.2 357.5L1064.5 361.4M1064.5 361.4L1087.2 365.4M1087.2 365.4L1110.9 369.5M1110.9 369.5L1135.5 373.8M1135.5 373.8L1161.3 378.2M1161.3 378.2L1188.0 382.8M1188.0 382.8L1216.2 387.6M1216.2 387.6L1246.4 392.4M1246.4 392.4L1279.5 397.0M1279.5 397.0L1308.8 401.6M1308.8 401.6L1341.6 405.9M1341.6 405.9L1391.7 413.9M991.0 345.5L1013.3 348.4M1013.3 348.4L1033.6 351.9M1033.6 351.9L1053.2 355.8M1053.2 355.8L1076.4 359.3M1076.4 359.3L1100.5 363.0M1100.5 363.0L1125.7 366.7M1125.7 366.7L1154.1 370.2M1154.1 370.2L1181.6 374.1M1181.6 374.1L1209.4 378.4M1209.4 378.4L1235.5 383.4M1235.5 383.4L1265.8 388.0M1265.8 388.0L1299.0 392.3M1299.0 392.3L1325.4 397.5M1325.4 397.5L1353.1 403.0M1353.1 403.0L1404.6 410.3M1003.1 343.6L1022.0 347.0M1022.0 347.0L1044.5 350.1M1044.5 350.1L1065.1 353.8M1065.1 353.8L1089.8 357.0M1089.8 357.0L1114.8 360.4M1114.8 360.4L1138.4 364.4M1138.4 364.4L1162.8 368.5M1162.8 368.5L1191.3 372.2M1191.3 372.2L1219.4 376.3M1219.4 376.3L1250.2 380.2M1250.2 380.2L1279.7 384.8M1279.7 384.8L1310.2 389.7M1310.2 389.7L1342.6 393.3M1342.6 393.3L1374.5 397.5M1374.5 397.5L1424.4 404.8M1033.5 345.2L1056.8 348.1M1056.8 348.1L1080.7 351.1M1080.7 351.1L1104.9 354.4M1104.9 354.4L1128.8 357.9M1128.8 357.9L1154.7 361.3M1154.7 361.3L1181.0 365.0M1181.0 365.0L1208.3 368.8M1208.3 368.8L1236.5 372.7M1236.5 372.7L1265.9 376.8M1265.9 376.8L1296.4 381.0M1296.4 381.0L1328.2 385.5M1328.2 385.5L1357.7 389.6M1357.7 389.6L1388.6 393.8M1388.6 393.8L1438.8 400.8M1045.6 343.3L1067.5 346.4M1067.5 346.4L1090.2 349.5M1090.2 349.5L1112.1 353.1M1112.1 353.1L1138.1 356.2M1138.1 356.2L1166.4 359.1M1166.4 359.1L1192.2 362.8M1192.2 362.8L1217.6 366.9M1217.6 366.9L1244.3 371.1M1244.3 371.1L1273.3 375.2M1273.3 375.2L1302.6 379.6M1302.6 379.6L1337.4 383.3M1337.4 383.3L1364.1 388.0M1364.1 388.0L1394.4 392.3M1394.4 392.3L1444.5 399.2M1077.6 344.7L1102.4 347.5M1102.4 347.5L1124.8 350.9M1124.8 350.9L1147.3 354.5M1147.3 354.5L1172.8 357.9M1172.8 357.9L1200.0 361.3M1200.0 361.3L1229.9 364.4M1229.9 364.4L1255.8 368.7M1255.8 368.7L1284.1 372.9M1284.1 372.9L1314.8 376.9M1314.8 376.9L1346.6 381.1M1346.6 381.1L1376.2 385.0M1376.2 385.0L1408.6 388.7M1087.4 343.1L1109.5 346.3M1109.5 346.3L1132.1 349.6M1132.1 349.6L1156.9 352.8M1156.9 352.8L1182.8 356.1M1182.8 356.1L1211.1 359.2M1211.1 359.2L1237.8 362.9M1237.8 362.9L1266.8 366.4M1266.8 366.4L1298.5 369.7M1298.5 369.7L1329.2 373.6M1329.2 373.6L1359.8 378.0M1359.8 378.0L1391.9 381.1M1391.9 381.1L1425.6 384.3M1119.4 344.6L1144.2 347.5M1144.2 347.5L1171.9 350.1M1171.9 350.1L1197.9 353.3M1197.9 353.3L1223.4 356.8M1223.4 356.8L1248.8 360.6M1248.8 360.6L1280.3 363.6M1280.3 363.6L1312.0 366.8M1312.0 366.8L1342.3 370.7M1342.3 370.7L1374.6 374.5M1374.6 374.5L1404.5 378.0M1404.5 378.0L1434.1 382.1M1156.8 345.3L1182.7 348.2M1182.7 348.2L1207.6 351.5M1207.6 351.5L1232.1 355.1M1232.1 355.1L1260.1 358.4M1260.1 358.4L1288.4 361.9M1288.4 361.9L1320.1 365.0M1320.1 365.0L1352.5 368.4M1352.5 368.4L1385.3 371.9M1385.3 371.9L1413.1 375.9M1413.1 375.9L1442.0 380.0M1162.6 344.3L1187.0 347.4M1187.0 347.4L1215.4 350.0M1215.4 350.0L1242.8 353.0M1242.8 353.0L1271.8 356.1M1271.8 356.1L1303.4 358.8M1303.4 358.8L1332.2 362.4M1332.2 362.4L1363.6 365.8M1363.6 365.8L1393.8 369.9M1393.8 369.9L1425.3 372.9M1195.5 345.9L1223.8 348.4M1223.8 348.4L1253.1 351.1M1253.1 351.1L1283.2 353.8M1283.2 353.8L1310.1 357.4M1310.1 357.4L1339.1 360.9M1339.1 360.9L1371.6 364.0M1371.6 364.0L1401.6 368.1M1401.6 368.1L1431.4 371.4M1206.5 343.9L1235.6 346.2M1235.6 346.2L1263.6 349.0M1263.6 349.0L1292.4 351.9M1292.4 351.9L1320.7 355.2M1320.7 355.2L1352.2 358.1M1352.2 358.1L1383.1 361.4M1383.1 361.4L1416.0 364.7M1416.0 364.7L1443.6 368.3M1243.4 344.8L1269.6 347.9M1269.6 347.9L1298.4 350.7M1298.4 350.7L1328.0 353.7M1328.0 353.7L1356.5 357.2M1356.5 357.2L1389.8 359.9M1389.8 359.9L1421.1 363.5M1248.8 343.8L1274.7 346.9M1274.7 346.9L1303.3 349.7M1303.3 349.7L1332.8 352.7M1332.8 352.7L1364.5 355.4M1364.5 355.4L1395.1 358.7M1395.1 358.7L1428.7 361.7M1283.4 345.2L1311.6 348.1M1311.6 348.1L1341.0 351.0M1341.0 351.0L1374.0 353.4M1374.0 353.4L1407.3 355.9M1407.3 355.9L1440.7 358.8M1290.4 343.9L1318.9 346.6M1318.9 346.6L1349.6 349.2M1349.6 349.2L1379.0 352.3M1379.0 352.3L1410.9 355.1M1410.9 355.1L1443.2 358.2M1326.5 345.1L1358.8 347.2M1358.8 347.2L1391.0 349.7M1391.0 349.7L1421.0 352.8M1336.6 343.1L1365.3 345.9M1365.3 345.9L1395.4 348.7M1395.4 348.7L1427.2 351.4M1371.6 344.6L1401.5 347.4M1401.5 347.4L1432.6 350.2M1380.1 342.8L1409.6 345.6M1409.6 345.6L1439.7 348.6M1417.5 343.9L1448.3 346.7" stroke="#6a7786" stroke-opacity="0.16" stroke-width="1.3" stroke-linecap="round"/>
<path d="M268.5 344.0L251.0 349.7M251.0 349.7L234.5 355.4M234.5 355.4L214.4 361.8M285.9 346.0L270.5 351.6M270.5 351.6L251.9 357.8M251.9 357.8L234.2 364.1M234.2 364.1L216.1 370.7M306.0 347.8L289.7 353.7M289.7 353.7L273.8 359.7M273.8 359.7L256.7 366.1M256.7 366.1L241.9 372.6M241.9 372.6L225.5 379.5M225.5 379.5L203.8 387.3M338.4 344.4L327.3 349.6M327.3 349.6L315.2 355.2M315.2 355.2L302.4 361.0M302.4 361.0L286.7 367.4M286.7 367.4L269.4 374.3M269.4 374.3L254.3 381.3M254.3 381.3L236.0 388.9M236.0 388.9L218.6 396.8M218.6 396.8L200.0 405.2M353.0 346.8L342.9 352.1M342.9 352.1L332.2 357.7M332.2 357.7L323.1 363.3M323.1 363.3L311.6 369.4M311.6 369.4L300.2 375.8M300.2 375.8L287.2 382.7M287.2 382.7L274.5 389.9M274.5 389.9L259.5 397.7M259.5 397.7L242.3 406.2M242.3 406.2L229.3 414.5M385.8 343.3L379.0 348.1M379.0 348.1L369.8 353.5M369.8 353.5L359.6 359.1M359.6 359.1L349.3 365.0M349.3 365.0L337.3 371.4M337.3 371.4L328.7 377.7M328.7 377.7L317.3 384.6M317.3 384.6L308.2 391.5M308.2 391.5L295.3 399.3M295.3 399.3L285.6 407.1M406.9 345.1L400.1 350.0M400.1 350.0L391.2 355.5M391.2 355.5L385.0 360.9M385.0 360.9L379.4 366.4M379.4 366.4L370.3 372.6M370.3 372.6L359.6 379.3M359.6 379.3L350.0 386.2M350.0 386.2L344.0 393.0M344.0 393.0L336.1 400.4M336.1 400.4L323.1 408.8M427.2 347.0L420.6 352.1M420.6 352.1L416.4 357.2M416.4 357.2L409.0 362.9M409.0 362.9L403.1 368.6M403.1 368.6L396.6 374.7M396.6 374.7L390.4 381.1M390.4 381.1L387.0 387.4M387.0 387.4L382.2 394.3M382.2 394.3L373.7 402.0M373.7 402.0L368.8 409.6M449.7 344.5L447.1 349.1M447.1 349.1L442.6 354.1M442.6 354.1L439.8 359.2M439.8 359.2L435.6 364.7M435.6 364.7L431.8 370.4M431.8 370.4L430.7 376.0M430.7 376.0L426.5 382.3M426.5 382.3L422.7 388.9M422.7 388.9L420.6 395.6M420.6 395.6L413.6 403.3M413.6 403.3L405.9 411.6M475.8 345.8L474.8 350.4M474.8 350.4L472.0 355.4M472.0 355.4L468.4 360.7M468.4 360.7L467.9 365.9M467.9 365.9L463.4 371.9M463.4 371.9L460.1 378.0M460.1 378.0L458.3 384.2M458.3 384.2L458.4 390.5M458.4 390.5L456.8 397.3M456.8 397.3L452.7 404.9M452.7 404.9L453.1 412.3M495.4 343.6L497.4 347.8M497.4 347.8L498.3 352.3M498.3 352.3L500.4 356.8M500.4 356.8L497.6 362.2M497.6 362.2L498.2 367.4M498.2 367.4L497.9 373.1M497.9 373.1L499.2 378.7M499.2 378.7L497.8 385.1M497.8 385.1L500.0 391.3M500.0 391.3L496.9 398.6M496.9 398.6L497.0 405.9M497.0 405.9L498.5 413.4M518.8 345.3L520.8 349.6M520.8 349.6L524.7 353.9M524.7 353.9L527.9 358.5M527.9 358.5L529.4 363.5M529.4 363.5L530.2 368.9M530.2 368.9L532.6 374.3M532.6 374.3L534.4 380.1M534.4 380.1L535.7 386.3M535.7 386.3L538.1 392.7M538.1 392.7L537.2 400.0M537.2 400.0L541.0 407.0M541.0 407.0L539.7 415.2M544.3 346.8L547.7 351.1M547.7 351.1L548.8 355.9M548.8 355.9L551.2 360.7M551.2 360.7L556.0 365.5M556.0 365.5L561.5 370.5M561.5 370.5L566.0 375.8M566.0 375.8L568.7 381.8M568.7 381.8L572.9 387.8M572.9 387.8L575.4 394.4M575.4 394.4L576.9 401.6M576.9 401.6L581.1 408.8M564.2 344.4L569.9 348.4M569.9 348.4L571.4 353.1M571.4 353.1L576.7 357.5M576.7 357.5L581.4 362.2M581.4 362.2L584.8 367.4M584.8 367.4L591.2 372.4M591.2 372.4L593.5 378.3M593.5 378.3L598.6 384.1M598.6 384.1L603.9 390.2M603.9 390.2L609.6 396.7M609.6 396.7L618.0 403.1M618.0 403.1L622.5 410.5M590.7 345.8L596.8 349.9M596.8 349.9L602.2 354.3M602.2 354.3L608.4 358.7M608.4 358.7L615.6 363.3M615.6 363.3L621.0 368.4M621.0 368.4L628.8 373.4M628.8 373.4L635.5 378.8M635.5 378.8L639.9 385.0M639.9 385.0L650.0 390.6M650.0 390.6L657.8 396.9M657.8 396.9L663.4 404.0M663.4 404.0L671.6 411.2M613.7 343.1L620.0 347.0M620.0 347.0L626.7 351.2M626.7 351.2L632.3 355.6M632.3 355.6L640.4 360.0M640.4 360.0L647.7 364.8M647.7 364.8L654.3 369.8M654.3 369.8L659.7 375.4M659.7 375.4L667.6 380.9M667.6 380.9L676.6 386.6M676.6 386.6L687.5 392.3M687.5 392.3L697.1 398.7M697.1 398.7L703.9 405.9M703.9 405.9L716.8 412.6M635.9 345.1L644.4 348.9M644.4 348.9L652.7 353.0M652.7 353.0L660.8 357.3M660.8 357.3L671.0 361.6M671.0 361.6L680.0 366.3M680.0 366.3L687.9 371.4M687.9 371.4L696.7 376.7M696.7 376.7L708.7 381.8M708.7 381.8L719.2 387.4M719.2 387.4L728.2 393.7M728.2 393.7L741.9 399.7M741.9 399.7L754.2 406.3M754.2 406.3L767.1 413.2M665.8 346.2L674.9 350.1M674.9 350.1L682.6 354.4M682.6 354.4L691.7 358.8M691.7 358.8L699.2 363.6M699.2 363.6L708.9 368.4M708.9 368.4L721.4 373.0M721.4 373.0L734.9 377.8M734.9 377.8L746.3 383.3M746.3 383.3L757.3 389.1M757.3 389.1L768.0 395.4M768.0 395.4L782.2 401.5M782.2 401.5L799.3 407.6M799.3 407.6L811.4 415.0M681.2 344.2L689.9 348.2M689.9 348.2L699.2 352.2M699.2 352.2L709.6 356.3M709.6 356.3L718.3 360.9M718.3 360.9L729.3 365.5M729.3 365.5L741.6 370.1M741.6 370.1L754.5 374.9M754.5 374.9L767.3 380.0M767.3 380.0L782.7 385.1M782.7 385.1L797.3 390.6M797.3 390.6L814.0 396.2M814.0 396.2L827.4 402.7M827.4 402.7L845.2 408.9M710.2 345.5L718.8 349.6M718.8 349.6L729.2 353.7M729.2 353.7L741.7 357.7M741.7 357.7L750.9 362.4M750.9 362.4L762.8 367.0M762.8 367.0L776.8 371.5M776.8 371.5L792.9 376.1M792.9 376.1L810.0 380.7M810.0 380.7L822.3 386.5M822.3 386.5L837.9 392.1M837.9 392.1L855.9 397.7M855.9 397.7L873.1 403.9M873.1 403.9L892.4 410.2M723.3 343.8L736.9 347.2M736.9 347.2L748.4 351.1M748.4 351.1L762.1 354.8M762.1 354.8L773.8 359.1M773.8 359.1L786.8 363.5M786.8 363.5L800.7 367.9M800.7 367.9L814.7 372.7M814.7 372.7L830.3 377.5M830.3 377.5L842.9 383.1M842.9 383.1L860.7 388.3M860.7 388.3L880.2 393.5M880.2 393.5L896.1 399.8M896.1 399.8L914.7 406.0M914.7 406.0L936.4 412.2M755.8 344.7L768.6 348.3M768.6 348.3L780.2 352.3M780.2 352.3L795.1 356.1M795.1 356.1L809.1 360.2M809.1 360.2L823.7 364.5M823.7 364.5L839.0 368.9M839.0 368.9L854.2 373.7M854.2 373.7L871.4 378.5M871.4 378.5L888.8 383.5M888.8 383.5L906.9 388.8M906.9 388.8L925.9 394.4M925.9 394.4L945.8 400.2M945.8 400.2L965.9 406.5M965.9 406.5L988.7 412.8M782.8 346.4L796.7 350.0M796.7 350.0L811.0 353.8M811.0 353.8L825.0 357.9M825.0 357.9L842.6 361.6M842.6 361.6L858.5 365.9M858.5 365.9L875.1 370.4M875.1 370.4L892.4 375.0M892.4 375.0L910.5 379.9M910.5 379.9L926.2 385.5M926.2 385.5L946.6 390.7M946.6 390.7L968.8 395.9M968.8 395.9L988.7 402.1M988.7 402.1L1010.6 408.4M1010.6 408.4L1031.0 415.5M798.0 344.3L813.8 347.7M813.8 347.7L826.2 351.6M826.2 351.6L842.0 355.4M842.0 355.4L859.3 359.1M859.3 359.1L873.2 363.7M873.2 363.7L892.9 367.6M892.9 367.6L908.7 372.4M908.7 372.4L927.2 377.1M927.2 377.1L944.6 382.3M944.6 382.3L964.9 387.4M964.9 387.4L986.8 392.6M986.8 392.6L1006.9 398.6M1006.9 398.6L1033.3 403.8M1033.3 403.8L1057.2 410.1M824.1 346.2L838.9 349.8M838.9 349.8L854.7 353.5M854.7 353.5L871.0 357.4M871.0 357.4L889.5 361.1M889.5 361.1L906.7 365.4M906.7 365.4L927.5 369.3M927.5 369.3L948.2 373.5M948.2 373.5L965.5 378.6M965.5 378.6L989.5 383.0M989.5 383.0L1013.1 387.7M1013.1 387.7L1033.1 393.5M1033.1 393.5L1059.8 398.5M1059.8 398.5L1084.3 404.4M1084.3 404.4L1110.4 410.5M841.4 343.8L855.2 347.5M855.2 347.5L872.2 351.0M872.2 351.0L888.9 354.7M888.9 354.7L904.9 358.8M904.9 358.8L922.7 362.8M922.7 362.8L941.9 366.9M941.9 366.9L961.4 371.3M961.4 371.3L981.9 375.8M981.9 375.8L1004.5 380.3M1004.5 380.3L1026.6 385.2M1026.6 385.2L1048.9 390.5M1048.9 390.5L1073.9 395.7M1073.9 395.7L1099.0 401.4M1099.0 401.4L1127.7 406.8M1127.7 406.8L1156.0 412.8M872.2 345.1L889.7 348.4M889.7 348.4L906.4 352.1M906.4 352.1L923.2 355.9M923.2 355.9L943.0 359.6M943.0 359.6L962.9 363.5M962.9 363.5L983.8 367.5M983.8 367.5L1005.7 371.6M1005.7 371.6L1028.2 376.0M1028.2 376.0L1049.2 381.0M1049.2 381.0L1071.4 386.1M1071.4 386.1L1099.5 390.6M1099.5 390.6L1126.3 395.7M1126.3 395.7L1153.6 401.1M1153.6 401.1L1178.9 407.6M1178.9 407.6L1205.5 414.5M881.9 343.7L898.5 347.1M898.5 347.1L917.3 350.4M917.3 350.4L936.2 353.9M936.2 353.9L956.1 357.5M956.1 357.5L975.4 361.4M975.4 361.4L996.0 365.4M996.0 365.4L1016.1 369.8M1016.1 369.8L1038.5 374.1M1038.5 374.1L1063.3 378.3M1063.3 378.3L1089.8 382.6M1089.8 382.6L1112.4 388.0M1112.4 388.0L1137.6 393.3M1137.6 393.3L1167.4 398.2M1167.4 398.2L1197.1 403.5M1197.1 403.5L1229.3 408.8M1229.3 408.8L1255.5 414.8M915.2 344.7L935.7 347.7M935.7 347.7L953.7 351.2M953.7 351.2L973.7 354.7M973.7 354.7L994.9 358.2M994.9 358.2L1016.2 362.0M1016.2 362.0L1037.7 366.1M1037.7 366.1L1059.8 370.3M1059.8 370.3L1081.1 375.0M1081.1 375.0L1108.2 379.0M1108.2 379.0L1131.2 384.2M1131.2 384.2L1155.3 389.6M1155.3 389.6L1183.8 394.6M1183.8 394.6L1212.9 399.9M1212.9 399.9L1244.8 405.2M1244.8 405.2L1271.9 410.7M1271.9 410.7L1304.0 415.6M946.5 346.0L963.7 349.7M963.7 349.7L982.7 353.3M982.7 353.3L1004.7 356.6M1004.7 356.6L1027.3 360.1M1027.3 360.1L1048.5 364.2M1048.5 364.2L1069.8 368.5M1069.8 368.5L1093.8 372.7M1093.8 372.7L1120.3 376.7M1120.3 376.7L1145.5 381.3M1145.5 381.3L1171.9 386.2M1171.9 386.2L1201.6 390.7M1201.6 390.7L1231.6 395.7M1231.6 395.7L1265.4 400.3M1265.4 400.3L1296.9 404.5M1296.9 404.5L1327.3 409.6M956.9 344.5L975.7 347.8M975.7 347.8L995.6 351.2M995.6 351.2L1019.1 354.3M1019.1 354.3L1043.2 357.5M1043.2 357.5L1064.5 361.4M1064.5 361.4L1087.2 365.4M1087.2 365.4L1110.9 369.5M1110.9 369.5L1135.5 373.8M1135.5 373.8L1161.3 378.2M1161.3 378.2L1188.0 382.8M1188.0 382.8L1216.2 387.6M1216.2 387.6L1246.4 392.4M1246.4 392.4L1279.5 397.0M1279.5 397.0L1308.8 401.6M1308.8 401.6L1341.6 405.9M1341.6 405.9L1391.7 413.9M991.0 345.5L1013.3 348.4M1013.3 348.4L1033.6 351.9M1033.6 351.9L1053.2 355.8M1053.2 355.8L1076.4 359.3M1076.4 359.3L1100.5 363.0M1100.5 363.0L1125.7 366.7M1125.7 366.7L1154.1 370.2M1154.1 370.2L1181.6 374.1M1181.6 374.1L1209.4 378.4M1209.4 378.4L1235.5 383.4M1235.5 383.4L1265.8 388.0M1265.8 388.0L1299.0 392.3M1299.0 392.3L1325.4 397.5M1325.4 397.5L1353.1 403.0M1353.1 403.0L1404.6 410.3M1003.1 343.6L1022.0 347.0M1022.0 347.0L1044.5 350.1M1044.5 350.1L1065.1 353.8M1065.1 353.8L1089.8 357.0M1089.8 357.0L1114.8 360.4M1114.8 360.4L1138.4 364.4M1138.4 364.4L1162.8 368.5M1162.8 368.5L1191.3 372.2M1191.3 372.2L1219.4 376.3M1219.4 376.3L1250.2 380.2M1250.2 380.2L1279.7 384.8M1279.7 384.8L1310.2 389.7M1310.2 389.7L1342.6 393.3M1342.6 393.3L1374.5 397.5M1374.5 397.5L1424.4 404.8M1033.5 345.2L1056.8 348.1M1056.8 348.1L1080.7 351.1M1080.7 351.1L1104.9 354.4M1104.9 354.4L1128.8 357.9M1128.8 357.9L1154.7 361.3M1154.7 361.3L1181.0 365.0M1181.0 365.0L1208.3 368.8M1208.3 368.8L1236.5 372.7M1236.5 372.7L1265.9 376.8M1265.9 376.8L1296.4 381.0M1296.4 381.0L1328.2 385.5M1328.2 385.5L1357.7 389.6M1357.7 389.6L1388.6 393.8M1388.6 393.8L1438.8 400.8M1045.6 343.3L1067.5 346.4M1067.5 346.4L1090.2 349.5M1090.2 349.5L1112.1 353.1M1112.1 353.1L1138.1 356.2M1138.1 356.2L1166.4 359.1M1166.4 359.1L1192.2 362.8M1192.2 362.8L1217.6 366.9M1217.6 366.9L1244.3 371.1M1244.3 371.1L1273.3 375.2M1273.3 375.2L1302.6 379.6M1302.6 379.6L1337.4 383.3M1337.4 383.3L1364.1 388.0M1364.1 388.0L1394.4 392.3M1394.4 392.3L1444.5 399.2M1077.6 344.7L1102.4 347.5M1102.4 347.5L1124.8 350.9M1124.8 350.9L1147.3 354.5M1147.3 354.5L1172.8 357.9M1172.8 357.9L1200.0 361.3M1200.0 361.3L1229.9 364.4M1229.9 364.4L1255.8 368.7M1255.8 368.7L1284.1 372.9M1284.1 372.9L1314.8 376.9M1314.8 376.9L1346.6 381.1M1346.6 381.1L1376.2 385.0M1376.2 385.0L1408.6 388.7M1087.4 343.1L1109.5 346.3M1109.5 346.3L1132.1 349.6M1132.1 349.6L1156.9 352.8M1156.9 352.8L1182.8 356.1M1182.8 356.1L1211.1 359.2M1211.1 359.2L1237.8 362.9M1237.8 362.9L1266.8 366.4M1266.8 366.4L1298.5 369.7M1298.5 369.7L1329.2 373.6M1329.2 373.6L1359.8 378.0M1359.8 378.0L1391.9 381.1M1391.9 381.1L1425.6 384.3M1119.4 344.6L1144.2 347.5M1144.2 347.5L1171.9 350.1M1171.9 350.1L1197.9 353.3M1197.9 353.3L1223.4 356.8M1223.4 356.8L1248.8 360.6M1248.8 360.6L1280.3 363.6M1280.3 363.6L1312.0 366.8M1312.0 366.8L1342.3 370.7M1342.3 370.7L1374.6 374.5M1374.6 374.5L1404.5 378.0M1404.5 378.0L1434.1 382.1M1156.8 345.3L1182.7 348.2M1182.7 348.2L1207.6 351.5M1207.6 351.5L1232.1 355.1M1232.1 355.1L1260.1 358.4M1260.1 358.4L1288.4 361.9M1288.4 361.9L1320.1 365.0M1320.1 365.0L1352.5 368.4M1352.5 368.4L1385.3 371.9M1385.3 371.9L1413.1 375.9M1413.1 375.9L1442.0 380.0M1162.6 344.3L1187.0 347.4M1187.0 347.4L1215.4 350.0M1215.4 350.0L1242.8 353.0M1242.8 353.0L1271.8 356.1M1271.8 356.1L1303.4 358.8M1303.4 358.8L1332.2 362.4M1332.2 362.4L1363.6 365.8M1363.6 365.8L1393.8 369.9M1393.8 369.9L1425.3 372.9M1195.5 345.9L1223.8 348.4M1223.8 348.4L1253.1 351.1M1253.1 351.1L1283.2 353.8M1283.2 353.8L1310.1 357.4M1310.1 357.4L1339.1 360.9M1339.1 360.9L1371.6 364.0M1371.6 364.0L1401.6 368.1M1401.6 368.1L1431.4 371.4M1206.5 343.9L1235.6 346.2M1235.6 346.2L1263.6 349.0M1263.6 349.0L1292.4 351.9M1292.4 351.9L1320.7 355.2M1320.7 355.2L1352.2 358.1M1352.2 358.1L1383.1 361.4M1383.1 361.4L1416.0 364.7M1416.0 364.7L1443.6 368.3M1243.4 344.8L1269.6 347.9M1269.6 347.9L1298.4 350.7M1298.4 350.7L1328.0 353.7M1328.0 353.7L1356.5 357.2M1356.5 357.2L1389.8 359.9M1389.8 359.9L1421.1 363.5M1248.8 343.8L1274.7 346.9M1274.7 346.9L1303.3 349.7M1303.3 349.7L1332.8 352.7M1332.8 352.7L1364.5 355.4M1364.5 355.4L1395.1 358.7M1395.1 358.7L1428.7 361.7M1283.4 345.2L1311.6 348.1M1311.6 348.1L1341.0 351.0M1341.0 351.0L1374.0 353.4M1374.0 353.4L1407.3 355.9M1407.3 355.9L1440.7 358.8M1290.4 343.9L1318.9 346.6M1318.9 346.6L1349.6 349.2M1349.6 349.2L1379.0 352.3M1379.0 352.3L1410.9 355.1M1410.9 355.1L1443.2 358.2M1326.5 345.1L1358.8 347.2M1358.8 347.2L1391.0 349.7M1391.0 349.7L1421.0 352.8M1336.6 343.1L1365.3 345.9M1365.3 345.9L1395.4 348.7M1395.4 348.7L1427.2 351.4M1371.6 344.6L1401.5 347.4M1401.5 347.4L1432.6 350.2M1380.1 342.8L1409.6 345.6M1409.6 345.6L1439.7 348.6M1417.5 343.9L1448.3 346.7" stroke="#a4624e" stroke-opacity="0.13" stroke-width="0.9" transform="translate(1.3 0.5)"/>
<path d="M229.3 414.5L212.8 423.8M285.6 407.1L273.5 415.6M273.5 415.6L255.0 425.4M255.0 425.4L236.9 435.7M236.9 435.7L223.4 445.9M223.4 445.9L204.9 457.5M323.1 408.8L310.3 417.7M310.3 417.7L297.2 427.1M297.2 427.1L284.5 437.0M284.5 437.0L273.7 447.2M273.7 447.2L256.5 459.0M256.5 459.0L241.5 471.1M241.5 471.1L224.2 484.4M368.8 409.6L358.5 418.4M358.5 418.4L348.9 427.6M348.9 427.6L342.5 436.8M342.5 436.8L333.7 447.0M333.7 447.0L319.5 458.7M319.5 458.7L312.5 470.0M312.5 470.0L297.3 483.4M405.9 411.6L403.5 419.6M403.5 419.6L400.2 428.2M400.2 428.2L392.0 438.0M392.0 438.0L382.7 448.7M382.7 448.7L377.7 459.3M377.7 459.3L374.0 470.4M374.0 470.4L362.9 483.6M453.1 412.3L448.1 421.0M448.1 421.0L441.4 430.4M441.4 430.4L438.0 439.9M438.0 439.9L434.4 450.0M434.4 450.0L430.5 460.9M430.5 460.9L426.4 472.6M426.4 472.6L421.9 485.1M498.5 413.4L499.6 421.4M499.6 421.4L499.5 430.1M499.5 430.1L499.4 439.4M499.4 439.4L499.3 449.3M499.3 449.3L499.1 459.9M499.1 459.9L497.4 471.5M497.4 471.5L498.8 483.5M539.7 415.2L542.7 423.2M542.7 423.2L545.0 431.9M545.0 431.9L545.4 441.5M545.4 441.5L549.8 451.1M549.8 451.1L552.7 461.6M552.7 461.6L556.9 472.7M556.9 472.7L564.4 484.0M581.1 408.8L588.1 416.0M588.1 416.0L595.2 423.7M595.2 423.7L600.4 432.2M600.4 432.2L605.9 441.3M605.9 441.3L609.8 451.3M609.8 451.3L612.9 462.2M612.9 462.2L619.0 473.5M619.0 473.5L623.9 485.8M622.5 410.5L628.5 418.2M628.5 418.2L635.5 426.3M635.5 426.3L644.2 434.6M644.2 434.6L651.9 443.7M651.9 443.7L661.6 453.2M661.6 453.2L672.2 463.2M672.2 463.2L684.9 473.6M684.9 473.6L699.2 484.6M671.6 411.2L681.6 418.5M681.6 418.5L693.7 426.0M693.7 426.0L702.9 434.6M702.9 434.6L714.2 443.4M714.2 443.4L726.6 452.7M726.6 452.7L739.1 462.8M739.1 462.8L752.4 473.5M752.4 473.5L766.1 485.2M716.8 412.6L724.8 420.6M724.8 420.6L739.1 428.0M739.1 428.0L749.1 436.9M749.1 436.9L761.2 446.0M761.2 446.0L778.0 455.0M778.0 455.0L790.4 465.6M790.4 465.6L806.5 476.4M806.5 476.4L824.1 487.9M767.1 413.2L780.7 420.6M780.7 420.6L792.6 428.8M792.6 428.8L808.0 437.0M808.0 437.0L824.1 445.7M824.1 445.7L842.1 454.9M842.1 454.9L856.0 465.7M856.0 465.7L879.8 475.3M879.8 475.3L900.7 486.6M811.4 415.0L829.2 422.0M829.2 422.0L842.1 430.4M842.1 430.4L857.1 439.1M857.1 439.1L874.1 448.2M874.1 448.2L895.5 457.1M895.5 457.1L914.9 467.4M914.9 467.4L936.8 478.1M936.8 478.1L959.4 487.8M845.2 408.9L862.6 415.7M862.6 415.7L880.5 423.0M880.5 423.0L897.9 430.9M897.9 430.9L916.4 439.4M916.4 439.4L940.9 447.3M940.9 447.3L960.9 457.0M960.9 457.0L987.6 466.0M987.6 466.0L1010.4 475.2M1010.4 475.2L1031.2 486.0M892.4 410.2L909.0 417.5M909.0 417.5L925.7 425.4M925.7 425.4L944.1 433.6M944.1 433.6L966.2 441.8M966.2 441.8L990.3 450.3M990.3 450.3L1015.5 459.4M1015.5 459.4L1040.0 468.0M1040.0 468.0L1063.5 477.7M936.4 412.2L956.6 419.2M956.6 419.2L976.4 426.9M976.4 426.9L998.1 434.9M998.1 434.9L1022.9 442.9M1022.9 442.9L1048.6 451.6M1048.6 451.6L1076.8 458.9M1076.8 458.9L1105.8 466.8M1105.8 466.8L1151.7 480.5M988.7 412.8L1008.4 420.2M1008.4 420.2L1031.4 427.7M1031.4 427.7L1056.7 435.3M1056.7 435.3L1079.8 444.2M1079.8 444.2L1105.2 451.9M1105.2 451.9L1133.5 459.6M1133.5 459.6L1179.7 472.7M1179.7 472.7L1226.6 488.2M1031.0 415.5L1054.7 422.6M1054.7 422.6L1080.9 429.8M1080.9 429.8L1108.6 437.4M1108.6 437.4L1134.6 444.6M1134.6 444.6L1165.8 451.3M1165.8 451.3L1212.3 463.7M1212.3 463.7L1262.7 477.3M1057.2 410.1L1083.1 416.5M1083.1 416.5L1110.8 423.0M1110.8 423.0L1138.2 430.4M1138.2 430.4L1163.2 437.5M1163.2 437.5L1192.8 444.3M1192.8 444.3L1240.1 456.0M1240.1 456.0L1289.2 469.4M1289.2 469.4L1346.2 482.5M1110.4 410.5L1139.2 416.6M1139.2 416.6L1166.2 423.8M1166.2 423.8L1193.6 430.0M1193.6 430.0L1224.5 436.1M1224.5 436.1L1272.2 447.0M1272.2 447.0L1323.6 459.0M1323.6 459.0L1379.7 471.5M1379.7 471.5L1437.4 484.6M1156.0 412.8L1189.2 418.3M1189.2 418.3L1218.8 423.8M1218.8 423.8L1248.1 430.1M1248.1 430.1L1294.0 441.0M1294.0 441.0L1342.8 453.2M1342.8 453.2L1402.0 464.2M1205.5 414.5L1232.0 420.6M1232.0 420.6L1261.4 426.6M1261.4 426.6L1310.9 436.3M1310.9 436.3L1362.1 447.4M1362.1 447.4L1418.4 458.8M1255.5 414.8L1284.7 420.6M1284.7 420.6L1331.7 430.5M1331.7 430.5L1387.0 439.9M1387.0 439.9L1442.0 451.0M1304.0 415.6L1350.3 425.4M1350.3 425.4L1403.1 435.1M1327.3 409.6L1376.3 418.1M1376.3 418.1L1430.2 426.9M1391.7 413.9L1442.6 423.2" stroke="#6a7786" stroke-opacity="0.36" stroke-width="2.2" stroke-linecap="round"/>
<path d="M229.3 414.5L212.8 423.8M285.6 407.1L273.5 415.6M273.5 415.6L255.0 425.4M255.0 425.4L236.9 435.7M236.9 435.7L223.4 445.9M223.4 445.9L204.9 457.5M323.1 408.8L310.3 417.7M310.3 417.7L297.2 427.1M297.2 427.1L284.5 437.0M284.5 437.0L273.7 447.2M273.7 447.2L256.5 459.0M256.5 459.0L241.5 471.1M241.5 471.1L224.2 484.4M368.8 409.6L358.5 418.4M358.5 418.4L348.9 427.6M348.9 427.6L342.5 436.8M342.5 436.8L333.7 447.0M333.7 447.0L319.5 458.7M319.5 458.7L312.5 470.0M312.5 470.0L297.3 483.4M405.9 411.6L403.5 419.6M403.5 419.6L400.2 428.2M400.2 428.2L392.0 438.0M392.0 438.0L382.7 448.7M382.7 448.7L377.7 459.3M377.7 459.3L374.0 470.4M374.0 470.4L362.9 483.6M453.1 412.3L448.1 421.0M448.1 421.0L441.4 430.4M441.4 430.4L438.0 439.9M438.0 439.9L434.4 450.0M434.4 450.0L430.5 460.9M430.5 460.9L426.4 472.6M426.4 472.6L421.9 485.1M498.5 413.4L499.6 421.4M499.6 421.4L499.5 430.1M499.5 430.1L499.4 439.4M499.4 439.4L499.3 449.3M499.3 449.3L499.1 459.9M499.1 459.9L497.4 471.5M497.4 471.5L498.8 483.5M539.7 415.2L542.7 423.2M542.7 423.2L545.0 431.9M545.0 431.9L545.4 441.5M545.4 441.5L549.8 451.1M549.8 451.1L552.7 461.6M552.7 461.6L556.9 472.7M556.9 472.7L564.4 484.0M581.1 408.8L588.1 416.0M588.1 416.0L595.2 423.7M595.2 423.7L600.4 432.2M600.4 432.2L605.9 441.3M605.9 441.3L609.8 451.3M609.8 451.3L612.9 462.2M612.9 462.2L619.0 473.5M619.0 473.5L623.9 485.8M622.5 410.5L628.5 418.2M628.5 418.2L635.5 426.3M635.5 426.3L644.2 434.6M644.2 434.6L651.9 443.7M651.9 443.7L661.6 453.2M661.6 453.2L672.2 463.2M672.2 463.2L684.9 473.6M684.9 473.6L699.2 484.6M671.6 411.2L681.6 418.5M681.6 418.5L693.7 426.0M693.7 426.0L702.9 434.6M702.9 434.6L714.2 443.4M714.2 443.4L726.6 452.7M726.6 452.7L739.1 462.8M739.1 462.8L752.4 473.5M752.4 473.5L766.1 485.2M716.8 412.6L724.8 420.6M724.8 420.6L739.1 428.0M739.1 428.0L749.1 436.9M749.1 436.9L761.2 446.0M761.2 446.0L778.0 455.0M778.0 455.0L790.4 465.6M790.4 465.6L806.5 476.4M806.5 476.4L824.1 487.9M767.1 413.2L780.7 420.6M780.7 420.6L792.6 428.8M792.6 428.8L808.0 437.0M808.0 437.0L824.1 445.7M824.1 445.7L842.1 454.9M842.1 454.9L856.0 465.7M856.0 465.7L879.8 475.3M879.8 475.3L900.7 486.6M811.4 415.0L829.2 422.0M829.2 422.0L842.1 430.4M842.1 430.4L857.1 439.1M857.1 439.1L874.1 448.2M874.1 448.2L895.5 457.1M895.5 457.1L914.9 467.4M914.9 467.4L936.8 478.1M936.8 478.1L959.4 487.8M845.2 408.9L862.6 415.7M862.6 415.7L880.5 423.0M880.5 423.0L897.9 430.9M897.9 430.9L916.4 439.4M916.4 439.4L940.9 447.3M940.9 447.3L960.9 457.0M960.9 457.0L987.6 466.0M987.6 466.0L1010.4 475.2M1010.4 475.2L1031.2 486.0M892.4 410.2L909.0 417.5M909.0 417.5L925.7 425.4M925.7 425.4L944.1 433.6M944.1 433.6L966.2 441.8M966.2 441.8L990.3 450.3M990.3 450.3L1015.5 459.4M1015.5 459.4L1040.0 468.0M1040.0 468.0L1063.5 477.7M936.4 412.2L956.6 419.2M956.6 419.2L976.4 426.9M976.4 426.9L998.1 434.9M998.1 434.9L1022.9 442.9M1022.9 442.9L1048.6 451.6M1048.6 451.6L1076.8 458.9M1076.8 458.9L1105.8 466.8M1105.8 466.8L1151.7 480.5M988.7 412.8L1008.4 420.2M1008.4 420.2L1031.4 427.7M1031.4 427.7L1056.7 435.3M1056.7 435.3L1079.8 444.2M1079.8 444.2L1105.2 451.9M1105.2 451.9L1133.5 459.6M1133.5 459.6L1179.7 472.7M1179.7 472.7L1226.6 488.2M1031.0 415.5L1054.7 422.6M1054.7 422.6L1080.9 429.8M1080.9 429.8L1108.6 437.4M1108.6 437.4L1134.6 444.6M1134.6 444.6L1165.8 451.3M1165.8 451.3L1212.3 463.7M1212.3 463.7L1262.7 477.3M1057.2 410.1L1083.1 416.5M1083.1 416.5L1110.8 423.0M1110.8 423.0L1138.2 430.4M1138.2 430.4L1163.2 437.5M1163.2 437.5L1192.8 444.3M1192.8 444.3L1240.1 456.0M1240.1 456.0L1289.2 469.4M1289.2 469.4L1346.2 482.5M1110.4 410.5L1139.2 416.6M1139.2 416.6L1166.2 423.8M1166.2 423.8L1193.6 430.0M1193.6 430.0L1224.5 436.1M1224.5 436.1L1272.2 447.0M1272.2 447.0L1323.6 459.0M1323.6 459.0L1379.7 471.5M1379.7 471.5L1437.4 484.6M1156.0 412.8L1189.2 418.3M1189.2 418.3L1218.8 423.8M1218.8 423.8L1248.1 430.1M1248.1 430.1L1294.0 441.0M1294.0 441.0L1342.8 453.2M1342.8 453.2L1402.0 464.2M1205.5 414.5L1232.0 420.6M1232.0 420.6L1261.4 426.6M1261.4 426.6L1310.9 436.3M1310.9 436.3L1362.1 447.4M1362.1 447.4L1418.4 458.8M1255.5 414.8L1284.7 420.6M1284.7 420.6L1331.7 430.5M1331.7 430.5L1387.0 439.9M1387.0 439.9L1442.0 451.0M1304.0 415.6L1350.3 425.4M1350.3 425.4L1403.1 435.1M1327.3 409.6L1376.3 418.1M1376.3 418.1L1430.2 426.9M1391.7 413.9L1442.6 423.2" stroke="#a4624e" stroke-opacity="0.29" stroke-width="0.9" transform="translate(1.3 0.5)"/>
<path d="M224.2 484.4L205.3 498.9M297.3 483.4L281.5 497.8M281.5 497.8L269.7 512.6M269.7 512.6L251.9 529.5M251.9 529.5L232.0 548.2M362.9 483.6L357.7 496.7M357.7 496.7L348.3 511.6M348.3 511.6L338.0 527.7M338.0 527.7L325.6 545.6M421.9 485.1L418.1 498.6M418.1 498.6L411.9 513.5M411.9 513.5L406.2 529.5M406.2 529.5L404.8 545.9M498.8 483.5L498.7 496.7M498.7 496.7L498.5 511.0M498.5 511.0L497.1 526.7M497.1 526.7L498.1 543.3M564.4 484.0L565.6 497.5M565.6 497.5L564.4 512.7M564.4 512.7L566.5 528.5M566.5 528.5L573.2 544.7M623.9 485.8L628.8 499.3M628.8 499.3L636.7 513.3M636.7 513.3L647.0 528.0M647.0 528.0L656.5 544.4M656.5 544.4L663.7 560.8M699.2 484.6L710.8 497.2M710.8 497.2L719.9 511.5M719.9 511.5L732.9 526.3M732.9 526.3L742.1 541.5M742.1 541.5L751.0 558.3M766.1 485.2L781.9 497.5M781.9 497.5L795.1 511.6M795.1 511.6L813.2 523.9M813.2 523.9L831.5 537.5M824.1 487.9L845.0 499.8M845.0 499.8L866.5 510.8M866.5 510.8L887.9 523.0M887.9 523.0L924.4 543.6M900.7 486.6L919.5 497.7M919.5 497.7L944.0 508.5M944.0 508.5L980.7 528.0M980.7 528.0L1021.1 550.1M959.4 487.8L980.8 499.0M980.8 499.0L1021.9 516.5M1021.9 516.5L1062.0 537.8M1062.0 537.8L1109.7 560.2M1031.2 486.0L1069.3 503.4M1069.3 503.4L1117.0 521.2M1117.0 521.2L1164.0 542.4M1063.5 477.7L1105.7 493.3M1105.7 493.3L1152.4 510.5M1152.4 510.5L1207.4 528.1M1207.4 528.1L1267.5 545.8M1151.7 480.5L1202.2 495.6M1202.2 495.6L1255.0 512.4M1255.0 512.4L1309.4 530.7M1309.4 530.7L1367.7 548.7M1226.6 488.2L1284.6 502.7M1284.6 502.7L1342.6 518.8M1342.6 518.8L1398.5 536.5M1262.7 477.3L1321.6 490.6M1321.6 490.6L1379.1 505.6M1379.1 505.6L1438.5 520.7M1346.2 482.5L1401.4 497.6" stroke="#6a7786" stroke-opacity="0.56" stroke-width="3.0" stroke-linecap="round"/>
<path d="M224.2 484.4L205.3 498.9M297.3 483.4L281.5 497.8M281.5 497.8L269.7 512.6M269.7 512.6L251.9 529.5M251.9 529.5L232.0 548.2M362.9 483.6L357.7 496.7M357.7 496.7L348.3 511.6M348.3 511.6L338.0 527.7M338.0 527.7L325.6 545.6M421.9 485.1L418.1 498.6M418.1 498.6L411.9 513.5M411.9 513.5L406.2 529.5M406.2 529.5L404.8 545.9M498.8 483.5L498.7 496.7M498.7 496.7L498.5 511.0M498.5 511.0L497.1 526.7M497.1 526.7L498.1 543.3M564.4 484.0L565.6 497.5M565.6 497.5L564.4 512.7M564.4 512.7L566.5 528.5M566.5 528.5L573.2 544.7M623.9 485.8L628.8 499.3M628.8 499.3L636.7 513.3M636.7 513.3L647.0 528.0M647.0 528.0L656.5 544.4M656.5 544.4L663.7 560.8M699.2 484.6L710.8 497.2M710.8 497.2L719.9 511.5M719.9 511.5L732.9 526.3M732.9 526.3L742.1 541.5M742.1 541.5L751.0 558.3M766.1 485.2L781.9 497.5M781.9 497.5L795.1 511.6M795.1 511.6L813.2 523.9M813.2 523.9L831.5 537.5M824.1 487.9L845.0 499.8M845.0 499.8L866.5 510.8M866.5 510.8L887.9 523.0M887.9 523.0L924.4 543.6M900.7 486.6L919.5 497.7M919.5 497.7L944.0 508.5M944.0 508.5L980.7 528.0M980.7 528.0L1021.1 550.1M959.4 487.8L980.8 499.0M980.8 499.0L1021.9 516.5M1021.9 516.5L1062.0 537.8M1062.0 537.8L1109.7 560.2M1031.2 486.0L1069.3 503.4M1069.3 503.4L1117.0 521.2M1117.0 521.2L1164.0 542.4M1063.5 477.7L1105.7 493.3M1105.7 493.3L1152.4 510.5M1152.4 510.5L1207.4 528.1M1207.4 528.1L1267.5 545.8M1151.7 480.5L1202.2 495.6M1202.2 495.6L1255.0 512.4M1255.0 512.4L1309.4 530.7M1309.4 530.7L1367.7 548.7M1226.6 488.2L1284.6 502.7M1284.6 502.7L1342.6 518.8M1342.6 518.8L1398.5 536.5M1262.7 477.3L1321.6 490.6M1321.6 490.6L1379.1 505.6M1379.1 505.6L1438.5 520.7M1346.2 482.5L1401.4 497.6" stroke="#a4624e" stroke-opacity="0.45" stroke-width="0.9" transform="translate(1.3 0.5)"/>
<path d="M232.0 548.2L207.6 569.2M325.6 545.6L308.1 566.1M308.1 566.1L288.2 588.8M288.2 588.8L279.0 611.3M279.0 611.3L258.0 638.7M258.0 638.7L244.0 664.4M244.0 664.4L220.8 695.1M404.8 545.9L404.2 563.7M404.2 563.7L399.1 584.1M399.1 584.1L392.5 606.9M392.5 606.9L385.1 629.6M385.1 629.6L371.0 656.3M371.0 656.3L348.0 703.7M498.1 543.3L497.9 561.7M497.9 561.7L497.6 582.0M497.6 582.0L497.4 601.8M497.4 601.8L495.1 624.3M495.1 624.3L495.2 662.8M495.2 662.8L495.6 708.2M573.2 544.7L574.9 563.7M574.9 563.7L579.6 581.6M579.6 581.6L590.4 599.7M590.4 599.7L602.2 633.1M602.2 633.1L612.4 673.1M612.4 673.1L632.0 717.1M663.7 560.8L678.1 577.1M678.1 577.1L702.3 605.3M702.3 605.3L722.0 640.1M722.0 640.1L738.7 682.0M751.0 558.3L774.6 585.2M774.6 585.2L805.0 615.1M805.0 615.1L832.0 651.4M832.0 651.4L866.0 690.4M831.5 537.5L860.9 561.3M860.9 561.3L894.3 588.2M894.3 588.2L927.4 620.0M927.4 620.0L973.3 651.8M973.3 651.8L1017.6 687.4M924.4 543.6L961.5 568.0M961.5 568.0L1004.1 594.9M1004.1 594.9L1043.4 626.5M1043.4 626.5L1087.3 659.8M1087.3 659.8L1135.4 691.2M1021.1 550.1L1067.0 574.2M1067.0 574.2L1109.7 602.6M1109.7 602.6L1161.5 630.4M1161.5 630.4L1210.7 658.5M1109.7 560.2L1159.8 584.6M1159.8 584.6L1212.9 610.1M1212.9 610.1L1265.6 634.6M1164.0 542.4L1212.0 565.8M1212.0 565.8L1271.4 586.9M1271.4 586.9L1323.9 609.3M1267.5 545.8L1326.9 564.9M1326.9 564.9L1376.1 586.6M1367.7 548.7L1422.7 566.4" stroke="#6a7786" stroke-opacity="0.7" stroke-width="3.5" stroke-linecap="round"/>
<path d="M232.0 548.2L207.6 569.2M325.6 545.6L308.1 566.1M308.1 566.1L288.2 588.8M288.2 588.8L279.0 611.3M279.0 611.3L258.0 638.7M258.0 638.7L244.0 664.4M244.0 664.4L220.8 695.1M404.8 545.9L404.2 563.7M404.2 563.7L399.1 584.1M399.1 584.1L392.5 606.9M392.5 606.9L385.1 629.6M385.1 629.6L371.0 656.3M371.0 656.3L348.0 703.7M498.1 543.3L497.9 561.7M497.9 561.7L497.6 582.0M497.6 582.0L497.4 601.8M497.4 601.8L495.1 624.3M495.1 624.3L495.2 662.8M495.2 662.8L495.6 708.2M573.2 544.7L574.9 563.7M574.9 563.7L579.6 581.6M579.6 581.6L590.4 599.7M590.4 599.7L602.2 633.1M602.2 633.1L612.4 673.1M612.4 673.1L632.0 717.1M663.7 560.8L678.1 577.1M678.1 577.1L702.3 605.3M702.3 605.3L722.0 640.1M722.0 640.1L738.7 682.0M751.0 558.3L774.6 585.2M774.6 585.2L805.0 615.1M805.0 615.1L832.0 651.4M832.0 651.4L866.0 690.4M831.5 537.5L860.9 561.3M860.9 561.3L894.3 588.2M894.3 588.2L927.4 620.0M927.4 620.0L973.3 651.8M973.3 651.8L1017.6 687.4M924.4 543.6L961.5 568.0M961.5 568.0L1004.1 594.9M1004.1 594.9L1043.4 626.5M1043.4 626.5L1087.3 659.8M1087.3 659.8L1135.4 691.2M1021.1 550.1L1067.0 574.2M1067.0 574.2L1109.7 602.6M1109.7 602.6L1161.5 630.4M1161.5 630.4L1210.7 658.5M1109.7 560.2L1159.8 584.6M1159.8 584.6L1212.9 610.1M1212.9 610.1L1265.6 634.6M1164.0 542.4L1212.0 565.8M1212.0 565.8L1271.4 586.9M1271.4 586.9L1323.9 609.3M1267.5 545.8L1326.9 564.9M1326.9 564.9L1376.1 586.6M1367.7 548.7L1422.7 566.4" stroke="#a4624e" stroke-opacity="0.56" stroke-width="0.9" transform="translate(1.3 0.5)"/>
</g>
<linearGradient id="fog1" gradientUnits="userSpaceOnUse" x1="282" y1="332.4" x2="288.9" y2="422.1"><stop offset="0" stop-color="#e4e6ea" stop-opacity="1"/><stop offset=".25" stop-color="#e3e7ec" stop-opacity=".85"/><stop offset="1" stop-color="#e8ebf0" stop-opacity="0"/></linearGradient>
<linearGradient id="fog2" gradientUnits="userSpaceOnUse" x1="1357" y1="282.7" x2="1354" y2="432.7"><stop offset="0" stop-color="#e4e6ea" stop-opacity="1"/><stop offset=".15" stop-color="#e5e7eb" stop-opacity=".88"/><stop offset=".5" stop-color="#e8eaef" stop-opacity=".55"/><stop offset="1" stop-color="#eaecf1" stop-opacity="0"/></linearGradient>
<path d="M282 332.4 L1018 276 L1018 376 L282 432Z" fill="url(#fog1)"/>
<path d="M1018 276 L1357 282.7 V440 H1018Z" fill="url(#fog2)"/>
<path d="M798 513 C797 500 795 486 790 472 C782 452 762 434 735 429 C705 424 672 430 650 450 C628 470 620 495 616.5 526 L640 531 L706 526 L782 522Z" fill="#1b1b1b"/>
<path d="M1202 392 C1201 372 1197 355 1185 348.5 C1172 342.5 1148 348 1134 362 C1120 376 1113 396 1108.5 421 L1150 440 L1202 412Z" fill="#1d1d1d"/>
<path d="M473 510 L461 492 L457 470 L458 452 L466 430 L481 409 L501 388 L528 374 L572 358 L616 344 L660 333 L689 327 L703 320 L751 287.6 L808 251 L835 240 L860 233 L919 228.6 L992 227 L1030 230 L1065 236 L1095 243 L1123 252 L1147 262 L1167 272.5 L1182 283 L1196 282.5 L1211 284 L1224 292 L1232 302 L1238 322 L1242 338 L1244 351 L1244 358 L1237 383 L1233 398 L1202 412 L1202 392 C1201 372 1197 355 1185 348.5 C1172 342.5 1148 348 1134 362 C1120 376 1113 396 1108.5 421 L1103 437 L1012 460 L801 514.5 L798 513 C797 500 795 486 790 472 C782 452 762 434 735 429 C705 424 672 430 650 450 C628 470 620 495 616.5 526 L617 540 L615 558 L591 564 L540 551 L500 530Z" fill="url(#bodyx)"/>
<path d="M473 510 L461 492 L457 470 L458 452 L466 430 L481 409 L501 388 L528 374 L572 358 L616 344 L660 333 L689 327 L703 320 L751 287.6 L808 251 L835 240 L860 233 L919 228.6 L992 227 L1030 230 L1065 236 L1095 243 L1123 252 L1147 262 L1167 272.5 L1182 283 L1196 282.5 L1211 284 L1224 292 L1232 302 L1238 322 L1242 338 L1244 351 L1244 358 L1237 383 L1233 398 L1202 412 L1202 392 C1201 372 1197 355 1185 348.5 C1172 342.5 1148 348 1134 362 C1120 376 1113 396 1108.5 421 L1103 437 L1012 460 L801 514.5 L798 513 C797 500 795 486 790 472 C782 452 762 434 735 429 C705 424 672 430 650 450 C628 470 620 495 616.5 526 L617 540 L615 558 L591 564 L540 551 L500 530Z" fill="url(#body)" opacity=".45"/>
<path d="M557 434 L788.5 352 L811.5 348 L812 418 L818 481 L794 490 C792 482 791 477 790 472 C782 452 762 434 735 429 C705 424 672 430 650 450 C628 470 620 495 616.5 526 L617 525 L609 463 L574.5 464.6Z" fill="url(#fend)"/>
<path d="M596 452 C612 420 650 398 700 392 C745 388 790 398 812 420" fill="none" stroke="#b0b0b0" stroke-width="12" opacity=".5" filter="url(#blur5)"/>
<path d="M640 456 C664 432 716 421 752 433 C772 441 784 455 789 468" fill="none" stroke="#ffffff" stroke-width="5" opacity=".8" stroke-linecap="round"/>
<path d="M473 510 L461 492 L457 470 L458 452 L466 458 L484 460 L531 466 L574.5 464.6 L609 463 L618 480 L617 540 L536.7 540 L533.7 523.6 L474.8 510Z" fill="#f4f4f4" />
<path d="M808 251.4 L835 240 L860 233 L919 228.6 L992 227 L1012 227.6 L1000 236.5 L945 240.5 L895 249.5 L874 253.5 L811 254Z" fill="url(#roof)" />
<path d="M481 409 L501.5 388 L528 373.7 L572 357.6 L615.7 344.4 L659.6 332.7 L689 327 L700.6 324 L720 335 L760 345 L788.5 351.7 L674 392.7 L615.7 413 L557 433.7 L536.6 431 L513 428 L501.5 432 L492.7 426.4Z" fill="url(#hood)" />
<path d="M788.5 351.7 L674 392.7 L615.7 413 L557 433.7" fill="none" stroke="#3a3a3a" stroke-width="0.8" />
<path d="M690.6 327 L703 320 L721 318 L793 337.5 L789 352.5 L760 346 L722 336Z" fill="#141414" />
<path d="M703 320.5 L751 287.6 L808.5 251.6 L812 253.5 L760 289.5 L721 318.5Z" fill="#3a4146" />
<path d="M721 318 L760 289 L811.5 253 L875 253 L793 337.5Z" fill="url(#wsg)" />
<path d="M721 318 L740 312 L800 306 L845 283 L793 337.5Z" fill="#56646a" opacity=".75"/>
<path d="M703 320.5 L751 287.6 L808.5 251.6 L875 252" fill="none" stroke="#2a2a2a" stroke-width="2.2" />
<path d="M792 268 L807 270 L808 281 L794 279Z" fill="#2a2a2a" />
<path d="M811.5 348 L835 319 L860 287.5 L877 268.5 L895 256.5 L920 246.8 L948 241.2 L995 238 L1003.5 316.4Z" fill="url(#glass)" />
<path d="M1008 238.8 L1060 243 L1103 250.5 L1120.6 300.3 L1024 313.5Z" fill="url(#glass)" />
<path d="M1117.7 257.8 L1137 270 L1152.8 282.7 L1155.7 294.4 L1131 298.8Z" fill="#4c5a60" />
<path d="M994.7 238 L1008 238.8 L1024 313.5 L1003.5 316.4Z" fill="#2c2c2c" />
<path d="M1103 250.5 L1117.7 255.5 L1131 298.8 L1120.6 300.3Z" fill="#2c2c2c" />
<path d="M1024 300 L1120 287 L1120.6 300.3 L1024 313.5Z" fill="#4e5b5f" />
<path d="M860 300 L1000 290 L1003.5 316.4 L840 343.5 L830 330Z" fill="#515e62" />
<path d="M879 293 L916 292 L925 329 L873 337Z" fill="url(#seat)" />
<rect x="886" y="271" width="31" height="22" rx="6" fill="url(#seat)" />
<path d="M940 299 L989 297 L1001 316.5 L934 327.5Z" fill="url(#seat)" />
<rect x="949" y="272.5" width="40" height="26.5" rx="7" fill="url(#seat)" />
<rect x="985" y="266.6" width="16" height="20.4" rx="5" fill="#8d9593" />
<rect x="1024" y="266.6" width="36" height="23.4" rx="7" fill="url(#seat)" />
<rect x="1062" y="266.6" width="41" height="24.9" rx="7" fill="url(#seat)" />
<path d="M1098 293 L1118 291 L1120.6 300.3 L1100 303Z" fill="#8d9593" />
<path d="M994.7 238 L1008 238.8 L1024 313.5 L1003.5 316.4Z" fill="#2c2c2c" />
<path d="M811.5 348 L835 322 L852 322 L850 343Z" fill="#2b2f30" />
<path d="M811.5 348.5 L1003.5 316.9 L1120.6 300.8 L1155.7 294.9" fill="none" stroke="#b9c6d2" stroke-width="1.6" />
<path d="M811.5 348 L835 319 L860 287.5 L877 268.5 L895 256.5 L920 246.8 L948 241.2 L995 238 L1060 243 L1103 250.5 L1137 270 L1152.8 282.7 L1155.7 294.4" fill="none" stroke="#8d99a3" stroke-width="1.2" />
<path d="M849 318 Q868 311 884 319 Q889 330 884 341 Q866 343 850 338 Q846 328 849 318Z" fill="#f3f3f3" stroke="#bdbdbd" stroke-width=".8"/>
<path d="M848 338 L884 342 L880 346 L850 342Z" fill="#2a2a2a" />
<path d="M794 490 L818.6 481 L1012 444 L1106.8 420.6 L1103 437 L1012 460 L801 514.5 L797 505Z" fill="#3f3f3f" />
<path d="M818.6 481 L824 498.5 L1012 456.5 L1103 433" fill="none" stroke="#1f1f1f" stroke-width="0.7" />
<path d="M817 441.5 L1012 407.8" fill="none" stroke="#b4c2d0" stroke-width="3.2" />
<path d="M817 445 L1012 411.3" fill="none" stroke="#f4f4f4" stroke-width="3" />
<path d="M1017 406.3 L1112 387.8" fill="none" stroke="#b4c2d0" stroke-width="3" />
<path d="M1017 409.6 L1112 391" fill="none" stroke="#f0f0f0" stroke-width="2.8" />
<path d="M812.3 347.6 L811.6 417.8 L818.6 481" fill="none" stroke="#333" stroke-width="0.9" />
<path d="M1012 318 L1016 350 L1015 390 L1013.7 414 L1012 456.5" fill="none" stroke="#333" stroke-width="0.9" />
<path d="M1132 301.800 C1140 313 1143.500 326 1141.500 342 C1139 358 1134 368 1129 378" fill="none" stroke="#3a3a3a" stroke-width=".8" stroke-dasharray="3 1.2"/>
<path d="M984 352 Q997 346 1011 350 Q1013 357 1009 361 Q996 364 985 360Z" fill="#f5f5f5" stroke="#b5b5b5" stroke-width=".8"/>
<path d="M1117 329 Q1128 324 1137 328 Q1139 334 1136 338 Q1126 341 1118 337Z" fill="#f2f2f2" stroke="#b5b5b5" stroke-width=".8"/>
<ellipse cx="788" cy="403.3" rx="9.5" ry="4.8" fill="#d4d4d4" stroke="#a8a8a8" stroke-width=".8" transform="rotate(-8 788 403.3)"/>
<path d="M1198 347.6 L1240 339" fill="none" stroke="#4a4a4a" stroke-width="0.8" />
<path d="M1200 393 L1237 382.7 L1233 398.5 L1201.6 412.6Z" fill="#3c3c3c" />
<path d="M1212 364 L1242 355" fill="none" stroke="#b4c2d0" stroke-width="2.2" />
<path d="M1113 421 C1118 398 1125 381 1138 367 C1151 353 1170 348 1182 353 C1193 359 1197 374 1198.500 394" fill="none" stroke="#ebebeb" stroke-width="10.500" stroke-linecap="butt"/>
<path d="M1104 416 C1110 390 1118 370 1133 356 C1148 343 1174 338 1188 345" fill="none" stroke="#c6c6c6" stroke-width="6" opacity=".55" stroke-linecap="round"/>
<path d="M1196.5 398 L1200 397 L1200.5 418 L1197.5 419Z" fill="#161616" />
<path d="M1018 227 L1051.8 187.6" fill="none" stroke="#333" stroke-width="1" />
<path d="M478.5 407.5 L491.5 431 L486 443 L470 460 L459.5 457 L458 444 L466 428Z" fill="#c9c9c9" />
<path d="M477.4 410.4 L488.6 430.6" fill="none" stroke="#141414" stroke-width="5.4" stroke-linecap="round"/>
<path d="M471.8 424.6 L483 438.4" fill="none" stroke="#141414" stroke-width="5.4" stroke-linecap="round"/>
<path d="M466 433.6 L477.2 445.6" fill="none" stroke="#141414" stroke-width="5.4" stroke-linecap="round"/>
<path d="M460.6 442.4 L469 455.6" fill="none" stroke="#141414" stroke-width="5.4" stroke-linecap="round"/>
<path d="M478 408 L466 428 L458 446 L459 458" fill="none" stroke="#9a9a9a" stroke-width="1.2" />
<path d="M484 460 L497 441 L515.6 428 L556 436 L574.5 464.6 L531 466 L500 463Z" fill="#c7ccd1" stroke="#333" stroke-width=".9"/>
<ellipse cx="510" cy="446" rx="7" ry="9" fill="#e3e6e9" stroke="#9aa0a6" stroke-width=".7" transform="rotate(20 510 446)"/>
<ellipse cx="522" cy="449" rx="5" ry="7" fill="#dde0e3" stroke="#9aa0a6" stroke-width=".7" transform="rotate(20 522 449)"/>
<ellipse cx="538" cy="451" rx="9.5" ry="6.5" fill="#e6e8ea" stroke="#9aa0a6" stroke-width=".7" transform="rotate(-5 538 451)"/>
<ellipse cx="525.5" cy="445.5" rx="1.6" ry="2.6" fill="#f0a020"/>
<path d="M574.5 464.6 L590 463 L609 463 L625 466 L639.5 470.7" fill="none" stroke="#2e2e2e" stroke-width="0.9" />
<path d="M474 483 L500 487.5 L540 490.5 L583 488.5" fill="none" stroke="#bcc8d4" stroke-width="3.4" stroke-linecap="round"/>
<path d="M474 486.8 L500 491.3 L540 494.3 L581 492.3" fill="none" stroke="#ffffff" stroke-width="2.4" />
<path d="M497 472 L514 473.5 L511 485 L495 483Z" fill="none" stroke="#555" stroke-width=".7"/>
<path d="M484 460 L476 478 L473 500 L476 510" fill="none" stroke="#666" stroke-width="0.6" stroke-dasharray="2 1.5"/>
<path d="M474.8 510 L533.7 523.6 L536.7 540 L488.4 525Z" fill="#1e1e1e" />
<path d="M478 513.5 L534.5 527" fill="none" stroke="#8a8a8a" stroke-width="0.8" />
<path d="M481.2 517.7 L535.1 531.1" fill="none" stroke="#8a8a8a" stroke-width="0.8" />
<path d="M484.4 521.9 L535.7 535.2" fill="none" stroke="#8a8a8a" stroke-width="0.8" />
<path d="M472.6 508.5 L488.4 525 L536.7 540 L617 540 L615 558 L591 564.4 L565 560 L539.8 550.8 L500 530Z" fill="#3d3d3d" />
<clipPath id="rwc"><path d="M1090 470 V421 L1117 417.8 L1138.4 375.7 L1166.5 359.9 L1191 368.600 L1198 393 L1202 412 V470Z"/></clipPath>
<g clip-path="url(#rwc)">
<g>
<ellipse cx="1152" cy="412" rx="46" ry="52" fill="url(#tire)" transform="rotate(4 1152 412)"/>
<ellipse cx="1163" cy="413.5" rx="28.8" ry="40.2" fill="#262626" transform="rotate(4 1163 413.5)"/>
<ellipse cx="1163" cy="413.5" rx="26.3" ry="37.7" fill="#4b4b4b" stroke="#d8d8d8" stroke-width="1.2" transform="rotate(4 1163 413.5)"/>
<path d="M1168.1 411.5 L1188.4 417.2 L1187.3 426.2 L1184.4 433.4 L1166.0 419.7Z" fill="url(#rimw2)"/>
<path d="M1167.3 417.9 L1176.8 444.2 L1171.2 448.7 L1165.5 449.9 L1161.5 420.7Z" fill="url(#rimw2)"/>
<path d="M1163.2 421.0 L1154.9 448.2 L1148.9 444.7 L1144.7 439.0 L1158.1 416.3Z" fill="url(#rimw2)"/>
<path d="M1159.0 418.5 L1139.0 426.0 L1137.2 417.2 L1137.7 408.9 L1158.4 409.7Z" fill="url(#rimw2)"/>
<path d="M1157.8 412.2 L1141.2 394.4 L1144.9 386.9 L1149.7 382.3 L1162.2 406.0Z" fill="url(#rimw2)"/>
<path d="M1160.5 406.9 L1159.8 377.2 L1166.2 376.7 L1171.8 379.2 L1166.6 408.0Z" fill="url(#rimw2)"/>
<path d="M1165.1 406.6 L1180.8 387.3 L1185.1 394.2 L1187.2 401.9 L1168.2 414.0Z" fill="url(#rimw2)"/>
<ellipse cx="1163" cy="413.5" rx="6.3" ry="9.0" fill="#e9e9e9"/>
<ellipse cx="1163" cy="413.5" rx="2.6" ry="3.8" fill="#b8bec8" stroke="#888" stroke-width=".6"/>
</g>
</g>
<g>
<ellipse cx="706" cy="508.5" rx="78" ry="76" fill="url(#tire)" transform="rotate(0 706 508.5)"/>
<ellipse cx="712" cy="514" rx="56.5" ry="54.5" fill="#262626" transform="rotate(0 712 514)"/>
<ellipse cx="712" cy="514" rx="54" ry="52" fill="#0c0c0c" stroke="#d8d8d8" stroke-width="1.2" transform="rotate(0 712 514)"/>
<path d="M721.5 509.0 L763.9 507.5 L764.8 520.1 L761.3 531.1 L720.0 521.0Z" fill="url(#rimw)"/>
<path d="M722.0 518.0 L749.7 549.0 L739.9 557.6 L728.9 561.7 L711.3 524.4Z" fill="url(#rimw)"/>
<path d="M714.9 524.0 L707.1 564.2 L694.0 562.2 L683.8 556.5 L703.1 519.9Z" fill="url(#rimw)"/>
<path d="M705.7 522.5 L668.2 541.6 L661.7 530.5 L659.9 519.2 L701.7 511.0Z" fill="url(#rimw)"/>
<path d="M701.2 514.5 L662.3 498.2 L667.2 486.4 L675.3 478.0 L708.0 504.3Z" fill="url(#rimw)"/>
<path d="M704.8 506.2 L693.8 466.7 L706.5 463.1 L718.3 463.9 L717.3 505.0Z" fill="url(#rimw)"/>
<path d="M713.9 503.8 L739.1 470.8 L749.9 478.1 L756.6 487.5 L722.7 512.4Z" fill="url(#rimw)"/>
<ellipse cx="712" cy="514" rx="13.0" ry="12.5" fill="#e9e9e9"/>
<ellipse cx="712" cy="514" rx="5.4" ry="5.2" fill="#b8bec8" stroke="#888" stroke-width=".6"/>
</g>
</svg></div>
  <div id="player" class="abs">
    <div class="abs topband"></div>
    <div class="abs red"></div>
    <svg class="abs" style="left:0;top:0" width="1075" height="55" viewBox="282 635 1075 55">
      <defs>
        <linearGradient id="bt" x1="0" y1="0" x2="0" y2="1"><stop offset="0" stop-color="#66718c"/><stop offset=".5" stop-color="#3d4663"/><stop offset="1" stop-color="#252c48"/></linearGradient>
        <linearGradient id="wi" x1="0" y1="0" x2="0" y2="1"><stop offset="0" stop-color="#ffffff"/><stop offset="1" stop-color="#c9c9c9"/></linearGradient>
        <linearGradient id="gw" x1="0" y1="0" x2="0" y2="1"><stop offset="0" stop-color="#d6f000"/><stop offset=".55" stop-color="#a4d400"/><stop offset="1" stop-color="#6fa800"/></linearGradient>
        <linearGradient id="cm" x1="0" y1="0" x2="0" y2="1"><stop offset="0" stop-color="#ffffff"/><stop offset="1" stop-color="#d0d0d0"/></linearGradient>
      </defs>
      <!-- knob -->
      <circle cx="286.8" cy="639" r="4.2" fill="#fff"/><circle cx="286.8" cy="639" r="2.3" fill="#1a1a1a"/>
      <!-- big buttons -->
      <g stroke="#0d1c3c" stroke-width="1.6">
        <circle cx="315.5" cy="664.5" r="16.8" fill="url(#bt)"/>
        <circle cx="362.3" cy="664.5" r="16.8" fill="url(#bt)"/>
        <circle cx="409.1" cy="664.5" r="16.8" fill="url(#bt)"/>
        <circle cx="468" cy="664.5" r="14" fill="url(#bt)"/>
        <circle cx="510" cy="664.5" r="14" fill="url(#bt)"/>
      </g>
      <path d="M311.7 655.5 L323.6 664.5 L311.7 673.5Z" fill="url(#wi)"/>
      <rect x="355" y="658.6" width="5.7" height="14.4" fill="url(#wi)"/><rect x="363.6" y="658.6" width="5.7" height="14.4" fill="url(#wi)"/>
      <rect x="401.8" y="658.6" width="14.4" height="14.4" fill="url(#wi)"/>
      <path d="M459.2 664.7 L466.3 659 V670.4Z M466 664.7 L473.2 659 V670.4Z" fill="url(#wi)"/>
      <path d="M518.8 664.7 L511.7 659 V670.4Z M512 664.7 L504.8 659 V670.4Z" fill="url(#wi)"/>
      <rect x="438" y="646" width="1" height="35" fill="#3a5a86"/>
      <!-- volume wedge + camera -->
      <path d="M1136 677.600 L1342 655 V677.600Z" fill="url(#gw)"/>
      <path d="M1320 666 L1311.800 677.600 H1316 L1321.200 670.200 L1326.400 677.600 H1330.600 L1322.400 666Z" fill="#dcdcdc"/>
      <rect x="1310" y="652.5" width="22.6" height="15" rx="2.4" fill="url(#cm)"/>
      <path d="M1332 660 L1342 653.2 V668 Z" fill="url(#cm)"/>
    </svg>
  </div>
</div>

<!-- ===== footer ===== -->
<div id="footer" class="abs">
  <div class="abs t" style="left:403px">版权所有：厦门凤凰创壹软件有限公司</div>
  <div class="abs t" style="left:616px;letter-spacing:.15px">Copyright © 2014</div>
  <div class="abs t" style="left:723.500px;letter-spacing:.2px">All Rights Reserved</div>
  <div class="abs t" style="left:839px;letter-spacing:.3px">闽ICP备08005447号-1</div>
</div>
<div id="desk" class="abs"></div>
<div id="ime" class="abs">
  <svg class="abs" style="left:0;top:0" width="155" height="23" viewBox="1211 705 155 23">
    <g fill="#2468f2">
      <rect x="1217.6" y="708.6" width="14.6" height="14.6" rx="2" fill="#fff" stroke="#2468f2" stroke-width="1.4"/>
      <path d="M1218 716 L1225 723 H1219.5 Q1218 723 1218 721.5Z"/>
      <circle cx="1225" cy="716" r="1.9"/><path d="M1225 716 L1231 710" stroke="#2468f2" stroke-width="1.3"/>
      <text x="1244.5" y="722" font-family="'Liberation Sans','Noto Sans CJK SC',sans-serif" font-weight="bold" font-size="15">中</text>
      <path d="M1279.500 707.800 A8.300 8.300 0 1 1 1268.800 720.300 A12.500 12.500 0 0 0 1279.500 707.800Z"/>
      <circle cx="1297.800" cy="712.600" r="2.300" fill="#fff" stroke="#2468f2" stroke-width="1.900"/>
      <path d="M1302.500 715.500 h4.200 q.9 5.200 -3.600 8.300 l-1.300 -1.200 q2.300 -2 1.300 -3.600 h-.6Z"/>
      <g fill="#8db2f6"><circle cx="1324" cy="712.3" r="3.4"/><path d="M1316.8 723 Q1317.5 716.6 1324 716.6 Q1330.500 716.6 1331.200 723Z"/></g>
      <g transform="translate(1350 716)"><circle r="4.2" fill="none" stroke="#2468f2" stroke-width="1.8"/>
        <g stroke="#2468f2" stroke-width="1.9"><path d="M0 -7.500V-4.500M0 7.500V4.500M-7.500 0H-4.500M7.500 0H4.500M-5.300 -5.300L-3.200 -3.200M5.300 5.300L3.200 3.200M-5.300 5.300L-3.200 3.200M5.300 -5.300L3.200 -3.200"/></g></g>
    </g>
  </svg>
</div>
<div id="rightedge" class="abs"></div>
</body>
</html>
